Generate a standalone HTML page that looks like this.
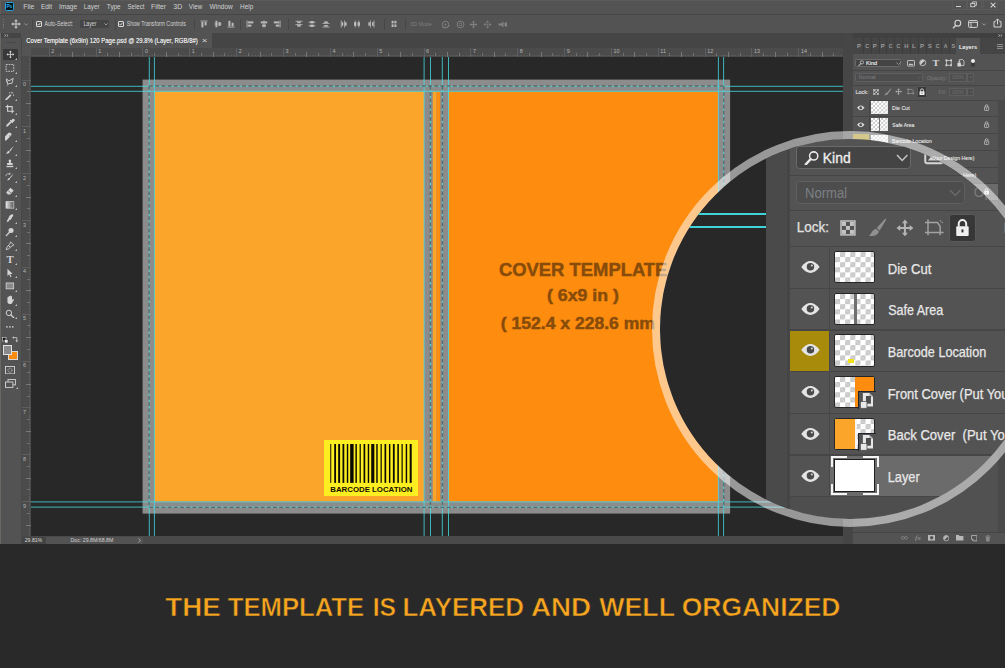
<!DOCTYPE html>
<html lang="en"><head><meta charset="utf-8"><title>Cover Template</title><style>
html,body{margin:0;padding:0;background:#292929}
body{width:1005px;height:668px;overflow:hidden;font-family:"Liberation Sans",sans-serif}
.root,.root div,.root span,.root svg{position:absolute;display:block}
.t{white-space:pre;transform-origin:0 50%}
</style></head>
<body>
<div class="root" style="left:0px;top:0px;width:1005px;height:668px;background:#292929;overflow:hidden;">
<div class="app" style="left:0px;top:0px;width:1005px;height:544px;background:#535353;">
<div class="menubar" style="left:0px;top:0px;width:1005px;height:14px;background:#535353;">
<div style="left:4.8px;top:1.9px;width:9.3px;height:9px;background:#04131d;border:1px solid #25a6da;box-sizing:border-box;border-radius:1.4px;"></div>
<span class="t" style="left:6px;top:3px;font-size:5px;line-height:6px;color:#2fb0e6;font-weight:bold;transform:translate(0.39px,0.22px) scaleX(0.97);">Ps</span>
<span class="t" style="left:23px;top:3px;font-size:6.9px;line-height:7px;color:#d2d2d2;transform:translate(0.26px,0.28px) scaleX(0.99);">File</span>
<span class="t" style="left:40px;top:3px;font-size:6.9px;line-height:7px;color:#d2d2d2;transform:translate(0.88px,0.28px) scaleX(0.94);">Edit</span>
<span class="t" style="left:58px;top:3px;font-size:6.9px;line-height:7px;color:#d2d2d2;transform:translate(0.91px,0.28px) scaleX(0.95);">Image</span>
<span class="t" style="left:83px;top:3px;font-size:6.9px;line-height:7px;color:#d2d2d2;transform:translate(0.8px,0.28px) scaleX(0.91);">Layer</span>
<span class="t" style="left:106px;top:3px;font-size:6.9px;line-height:7px;color:#d2d2d2;transform:translate(0.87px,0.28px) scaleX(0.92);">Type</span>
<span class="t" style="left:127px;top:3px;font-size:6.9px;line-height:7px;color:#d2d2d2;transform:translate(0.53px,0.28px) scaleX(0.88);">Select</span>
<span class="t" style="left:151px;top:3px;font-size:6.9px;line-height:7px;color:#d2d2d2;transform:translate(0.06px,0.28px) scaleX(0.98);">Filter</span>
<span class="t" style="left:173px;top:3px;font-size:6.9px;line-height:7px;color:#d2d2d2;transform:translate(0.32px,0.28px) scaleX(1.02);">3D</span>
<span class="t" style="left:188px;top:3px;font-size:6.9px;line-height:7px;color:#d2d2d2;transform:translate(0.87px,0.28px) scaleX(0.91);">View</span>
<span class="t" style="left:209px;top:3px;font-size:6.9px;line-height:7px;color:#d2d2d2;transform:translate(0.57px,0.28px) scaleX(0.95);">Window</span>
<span class="t" style="left:240px;top:3px;font-size:6.9px;line-height:7px;color:#d2d2d2;transform:translate(0.09px,0.28px) scaleX(0.93);">Help</span>
<div style="left:0px;top:0px;width:1005px;height:0.6px;background:#5c5a57;"></div>
<div style="left:0px;top:0px;width:0.8px;height:14px;background:#625e58;"></div>
<div style="left:951.6px;top:0px;width:15.2px;height:9.8px;background:transparent;border:0.6px solid #5a5a5a;border-top:none;box-sizing:border-box;"></div>
<div style="left:967.3px;top:0px;width:15.2px;height:9.8px;background:transparent;border:0.6px solid #5a5a5a;border-top:none;box-sizing:border-box;"></div>
<div style="left:983px;top:0px;width:15.2px;height:9.8px;background:transparent;border:0.6px solid #5a5a5a;border-top:none;box-sizing:border-box;"></div>
<div style="left:955.8px;top:6px;width:5.6px;height:1px;background:#d0d0d0;"></div>
<svg style="left:969.8px;top:1.4px;" width="7.4" height="7.4" viewBox="0 0 8 8"><rect x="0.8" y="2.6" width="4.4" height="3.6" fill="none" stroke="#d8d8d8" stroke-width="0.9"/><path d="M2.6 2.6V1h4.6v3.6H5.4" fill="none" stroke="#d8d8d8" stroke-width="0.9"/></svg>
<svg style="left:989.8px;top:1.6px;" width="6.4" height="6.4" viewBox="0 0 7 7"><path d="M0.8 0.8L6 6M6 0.8L0.8 6" stroke="#e0e0e0" stroke-width="1.1"/></svg>
</div>
<div style="left:0px;top:14px;width:1005px;height:1px;background:#454545;"></div>
<div class="optionsbar" style="left:0px;top:15px;width:1005px;height:17.5px;background:#535353;">
<div style="left:3.2px;top:3.5px;width:0.8px;height:11px;background:repeating-linear-gradient(#777 0 0.8px,transparent 0.8px 1.6px);"></div>
<svg style="left:10.5px;top:4px;" width="10" height="10" viewBox="0 0 10 10"><path d="M5 0.3L6.7 2.3H5.5V4.5H7.7V3.3L9.7 5L7.7 6.7V5.5H5.5V7.7H6.7L5 9.7L3.3 7.7H4.5V5.5H2.3V6.7L0.3 5L2.3 3.3V4.5H4.5V2.3H3.3Z" fill="#cfcfcf"/></svg>
<svg style="left:23.5px;top:7.6px;" width="4.4" height="3" viewBox="0 0 4.4 3"><path d="M0.4 0.4L2.2 2.2L4 0.4" fill="none" stroke="#aaa" stroke-width="0.7"/></svg>
<div style="left:32px;top:3.5px;width:0.6px;height:11px;background:#474747;"></div>
<div style="left:36.2px;top:5.6px;width:6px;height:6px;background:transparent;border:0.8px solid #d8d8d8;box-sizing:border-box;border-radius:1px;"></div>
<svg style="left:37.2px;top:6.6px;" width="4" height="4" viewBox="0 0 4 4"><path d="M0.6 2.1L1.6 3.1L3.5 0.8" fill="none" stroke="#e6e6e6" stroke-width="0.9"/></svg>
<span class="t" style="left:44px;top:5px;font-size:6.4px;line-height:7px;color:#d2d2d2;transform:translate(0.5px,0.21px) scaleX(0.82);">Auto-Select:</span>
<div style="left:80px;top:4.9px;width:28.8px;height:8.2px;background:#454545;border-radius:1px;"></div>
<span class="t" style="left:83px;top:5px;font-size:6.3px;line-height:7px;color:#d2d2d2;transform:translate(0.38px,0.17px) scaleX(0.83);">Layer</span>
<svg style="left:103.5px;top:7.8px;" width="4" height="3" viewBox="0 0 4 3"><path d="M0.4 0.4L2 2L3.6 0.4" fill="none" stroke="#bbb" stroke-width="0.7"/></svg>
<div style="left:114.5px;top:3.5px;width:0.6px;height:11px;background:#474747;"></div>
<div style="left:118.3px;top:5.6px;width:6px;height:6px;background:transparent;border:0.8px solid #d8d8d8;box-sizing:border-box;border-radius:1px;"></div>
<svg style="left:119.3px;top:6.6px;" width="4" height="4" viewBox="0 0 4 4"><path d="M0.6 2.1L1.6 3.1L3.5 0.8" fill="none" stroke="#e6e6e6" stroke-width="0.9"/></svg>
<span class="t" style="left:126px;top:5px;font-size:6.4px;line-height:7px;color:#d2d2d2;transform:translate(0.76px,0.21px) scaleX(0.82);">Show Transform Controls</span>
<div style="left:193.5px;top:3.5px;width:0.6px;height:11px;background:#474747;"></div>
<svg style="left:200.2px;top:5px;" width="8" height="8" viewBox="0 0 8 8"><rect x="0.5" y="0.6" width="7" height="0.9" fill="#b9b9b9"/><rect x="1.4" y="2" width="2" height="5.4" fill="#b9b9b9"/><rect x="4.6" y="2" width="2" height="3.4" fill="#b9b9b9"/></svg>
<svg style="left:213.6px;top:5px;" width="8" height="8" viewBox="0 0 8 8"><rect x="0.3" y="3.6" width="7.4" height="0.8" fill="#b9b9b9"/><rect x="1.4" y="0.8" width="2" height="6.4" fill="#b9b9b9"/><rect x="4.6" y="2" width="2" height="4" fill="#b9b9b9"/></svg>
<svg style="left:227.4px;top:5px;" width="8" height="8" viewBox="0 0 8 8"><rect x="0.5" y="6.6" width="7" height="0.9" fill="#b9b9b9"/><rect x="1.4" y="0.8" width="2" height="5.4" fill="#b9b9b9"/><rect x="4.6" y="2.8" width="2" height="3.4" fill="#b9b9b9"/></svg>
<svg style="left:245.6px;top:5px;" width="8" height="8" viewBox="0 0 8 8"><rect x="0.6" y="0.5" width="0.9" height="7" fill="#b9b9b9"/><rect x="2" y="1.4" width="5.4" height="2" fill="#b9b9b9"/><rect x="2" y="4.6" width="3.4" height="2" fill="#b9b9b9"/></svg>
<svg style="left:259.6px;top:5px;" width="8" height="8" viewBox="0 0 8 8"><rect x="3.6" y="0.3" width="0.8" height="7.4" fill="#b9b9b9"/><rect x="0.8" y="1.4" width="6.4" height="2" fill="#b9b9b9"/><rect x="2" y="4.6" width="4" height="2" fill="#b9b9b9"/></svg>
<svg style="left:272.8px;top:5px;" width="8" height="8" viewBox="0 0 8 8"><rect x="6.6" y="0.5" width="0.9" height="7" fill="#b9b9b9"/><rect x="0.8" y="1.4" width="5.4" height="2" fill="#b9b9b9"/><rect x="2.8" y="4.6" width="3.4" height="2" fill="#b9b9b9"/></svg>
<svg style="left:294.6px;top:5px;" width="8" height="8" viewBox="0 0 8 8"><rect x="0.5" y="0.8" width="7" height="0.8" fill="#b9b9b9"/><rect x="0.5" y="4.2" width="7" height="0.8" fill="#b9b9b9"/><rect x="2.2" y="1.6" width="3.6" height="1.6" fill="#b9b9b9"/><rect x="2.2" y="5" width="3.6" height="1.6" fill="#b9b9b9"/></svg>
<svg style="left:308.4px;top:5px;" width="8" height="8" viewBox="0 0 8 8"><rect x="0.5" y="1.8" width="7" height="0.8" fill="#b9b9b9"/><rect x="0.5" y="5.4" width="7" height="0.8" fill="#b9b9b9"/><rect x="2.2" y="1" width="3.6" height="2.4" fill="#b9b9b9"/><rect x="2.2" y="4.6" width="3.6" height="2.4" fill="#b9b9b9"/></svg>
<svg style="left:322px;top:5px;" width="8" height="8" viewBox="0 0 8 8"><rect x="0.5" y="3" width="7" height="0.8" fill="#b9b9b9"/><rect x="0.5" y="6.6" width="7" height="0.8" fill="#b9b9b9"/><rect x="2.2" y="1.4" width="3.6" height="1.6" fill="#b9b9b9"/><rect x="2.2" y="5" width="3.6" height="1.6" fill="#b9b9b9"/></svg>
<svg style="left:340.4px;top:5px;" width="8" height="8" viewBox="0 0 8 8"><rect x="0.8" y="0.5" width="0.8" height="7" fill="#b9b9b9"/><rect x="4.2" y="0.5" width="0.8" height="7" fill="#b9b9b9"/><rect x="1.6" y="2.2" width="1.6" height="3.6" fill="#b9b9b9"/><rect x="5" y="2.2" width="1.6" height="3.6" fill="#b9b9b9"/></svg>
<svg style="left:353.4px;top:5px;" width="8" height="8" viewBox="0 0 8 8"><rect x="1.8" y="0.5" width="0.8" height="7" fill="#b9b9b9"/><rect x="5.4" y="0.5" width="0.8" height="7" fill="#b9b9b9"/><rect x="1" y="2.2" width="2.4" height="3.6" fill="#b9b9b9"/><rect x="4.6" y="2.2" width="2.4" height="3.6" fill="#b9b9b9"/></svg>
<svg style="left:367.2px;top:5px;" width="8" height="8" viewBox="0 0 8 8"><rect x="3" y="0.5" width="0.8" height="7" fill="#b9b9b9"/><rect x="6.6" y="0.5" width="0.8" height="7" fill="#b9b9b9"/><rect x="1.4" y="2.2" width="1.6" height="3.6" fill="#b9b9b9"/><rect x="5" y="2.2" width="1.6" height="3.6" fill="#b9b9b9"/></svg>
<svg style="left:390px;top:5px;" width="8" height="8" viewBox="0 0 8 8"><rect x="1.6" y="0.8" width="2" height="2.6" fill="#b9b9b9"/><rect x="4.4" y="0.8" width="2" height="2.6" fill="#b9b9b9"/><rect x="1.6" y="4.4" width="2" height="2.6" fill="#b9b9b9"/><rect x="4.4" y="4.4" width="2" height="2.6" fill="#b9b9b9"/></svg>
<div style="left:240.4px;top:3.5px;width:0.6px;height:11px;background:#474747;"></div>
<div style="left:288.2px;top:3.5px;width:0.6px;height:11px;background:#474747;"></div>
<div style="left:383.6px;top:3.5px;width:0.6px;height:11px;background:#474747;"></div>
<div style="left:404.6px;top:3.5px;width:0.6px;height:11px;background:#474747;"></div>
<span class="t" style="left:410px;top:5px;font-size:6.2px;line-height:7px;color:#7e7e7e;transform:translate(0.19px,0.14px) scaleX(0.86);">3D Mode:</span>
<svg style="left:441.3px;top:4.5px;" width="9" height="9" viewBox="0 0 9 9"><circle cx="4.5" cy="4.5" r="3.3" fill="none" stroke="#828282" stroke-width="0.9"/><path d="M1 6.6C3 8.6 7 8 8.4 5" fill="none" stroke="#828282" stroke-width="0.9"/><circle cx="4.5" cy="4.5" r="1" fill="#828282"/></svg>
<svg style="left:455.7px;top:4.5px;" width="9" height="9" viewBox="0 0 9 9"><circle cx="4.5" cy="4.5" r="3.4" fill="none" stroke="#828282" stroke-width="0.9"/><circle cx="4.5" cy="4.5" r="1.4" fill="none" stroke="#828282" stroke-width="0.8"/></svg>
<svg style="left:469.1px;top:4.5px;" width="9" height="9" viewBox="0 0 9 9"><path d="M4.5 0.5L6 2.4H5V4H6.6V3L8.5 4.5L6.6 6V5H5V6.6H6L4.5 8.5L3 6.6H4V5H2.4V6L0.5 4.5L2.4 3V4H4V2.4H3Z" fill="#828282"/></svg>
<svg style="left:483.1px;top:4.5px;" width="9" height="9" viewBox="0 0 9 9"><path d="M4.5 0.5L6.2 2.6H2.8ZM4.5 8.5L2.8 6.4H6.2ZM0.5 4.5L2.6 2.8V6.2ZM8.5 4.5L6.4 6.2V2.8Z" fill="#828282"/><circle cx="4.5" cy="4.5" r="1" fill="#828282"/></svg>
<svg style="left:497.5px;top:4.5px;" width="10" height="9" viewBox="0 0 10 9"><path d="M0.5 3.5L3 3.5L5.5 1.5V7.5L3 5.5H0.5Z" fill="#828282"/><path d="M6.5 3L9 2V7L6.5 6Z" fill="#828282"/></svg>
<svg style="left:952px;top:3.6px;" width="10" height="10" viewBox="0 0 10 10"><circle cx="5.8" cy="4.2" r="2.9" fill="none" stroke="#d6d6d6" stroke-width="1.1"/><path d="M3.8 6.3L1 9.2" stroke="#d6d6d6" stroke-width="1.3"/></svg>
<svg style="left:968px;top:4.6px;" width="10" height="8" viewBox="0 0 10 8"><rect x="0.6" y="0.6" width="8.8" height="6.8" rx="0.8" fill="none" stroke="#d6d6d6" stroke-width="1"/><path d="M0.6 2.4H9.4M3 2.4V7.4" stroke="#d6d6d6" stroke-width="0.9"/></svg>
<svg style="left:982px;top:7.7px;" width="4.4" height="3" viewBox="0 0 4.4 3"><path d="M0.4 0.4L2.2 2.2L4 0.4" fill="none" stroke="#bbb" stroke-width="0.7"/></svg>
<svg style="left:992.5px;top:3.4px;" width="9" height="10" viewBox="0 0 9 10"><path d="M2.6 3.6H1V9H8V3.6H6.4" fill="none" stroke="#d6d6d6" stroke-width="1"/><path d="M4.5 6.4V1M2.8 2.6L4.5 0.9L6.2 2.6" fill="none" stroke="#d6d6d6" stroke-width="1"/></svg>
</div>
<div style="left:0px;top:32.5px;width:1005px;height:0.8px;background:#414141;"></div>
<div class="tabbar" style="left:22px;top:33px;width:821px;height:14.5px;background:#454545;">
<div class="tab" style="left:0px;top:0px;width:190px;height:14.5px;background:#535353;">
<span class="t" style="left:4px;top:4px;font-size:6.5px;line-height:7px;color:#e4e4e4;transform:translate(0.3px,0.04px) scaleX(0.92);text-shadow:0 0 0.3px #e4e4e4;">Cover Template (6x9in) 120 Page.psd @ 29.8% (Layer, RGB/8#)</span>
<span class="t" style="left:179px;top:3px;font-size:7.5px;line-height:9px;color:#d8d8d8;transform:translate(0.71px,0.19px) scaleX(1.32);">×</span>
</div>
</div>
<div class="toolbar" style="left:0px;top:33px;width:21.5px;height:511px;background:#535353;">
<div style="left:0px;top:0.2px;width:0.8px;height:510.8px;background:#6a6661;"></div>
<div style="left:0.8px;top:0.2px;width:20.7px;height:5.2px;background:#454545;"></div>
<svg style="left:3.6px;top:1.4px;" width="5" height="3" viewBox="0 0 5 3"><path d="M0.4 0.3L1.9 1.5L0.4 2.7M2.6 0.3L4.1 1.5L2.6 2.7" fill="none" stroke="#c8c8c8" stroke-width="0.7"/></svg>
<div style="left:5.5px;top:8.6px;width:10px;height:1.2px;background:#484848;"></div>
<div style="left:20.9px;top:5.4px;width:0.6px;height:505.6px;background:#484848;"></div>
<div style="left:2.7px;top:15.6px;width:15.6px;height:11.8px;background:#383838;border-radius:1px;"></div>
<svg style="left:5.5px;top:17.2px;" width="8.8" height="8.8" viewBox="0 0 12 12"><path d="M6 0.6L7.9 2.9H6.6V5.4H9.1V4.1L11.4 6L9.1 7.9V6.6H6.6V9.1H7.9L6 11.4L4.1 9.1H5.4V6.6H2.9V7.9L0.6 6L2.9 4.1V5.4H5.4V2.9H4.1Z" fill="#d4d4d4"/></svg>
<svg style="left:15px;top:25.2px;" width="2" height="2" viewBox="0 0 2 2"><path d="M2 0V2H0Z" fill="#c0c0c0"/></svg>
<svg style="left:5px;top:30.33px;" width="9.8" height="9.8" viewBox="0 0 12 12"><rect x="1.3" y="1.8" width="9.4" height="8.4" fill="none" stroke="#d4d4d4" stroke-width="1.1" stroke-dasharray="2 1.2"/></svg>
<svg style="left:15px;top:38.83px;" width="2" height="2" viewBox="0 0 2 2"><path d="M2 0V2H0Z" fill="#c0c0c0"/></svg>
<svg style="left:5px;top:43.96px;" width="9.8" height="9.8" viewBox="0 0 12 12"><path d="M1.5 2L5 4.8L10 1.6L8.6 7.6L4.4 8.2L2.6 10.6" fill="none" stroke="#d4d4d4" stroke-width="1.1" stroke-linejoin="round"/><path d="M3.4 8.4L1.6 3Z" stroke="#d4d4d4" stroke-width="1"/></svg>
<svg style="left:15px;top:52.46px;" width="2" height="2" viewBox="0 0 2 2"><path d="M2 0V2H0Z" fill="#c0c0c0"/></svg>
<svg style="left:5px;top:57.59px;" width="9.8" height="9.8" viewBox="0 0 12 12"><path d="M1.4 10.6L6.6 5.4" stroke="#d4d4d4" stroke-width="1.9" stroke-linecap="round"/><path d="M8.6 1V3.2M7.5 2.1H9.7M10.4 4.4V5.8M9.7 5.1H11.1M5.6 1.6V2.8M5 2.2H6.2" stroke="#d4d4d4" stroke-width="0.8"/></svg>
<svg style="left:15px;top:66.09px;" width="2" height="2" viewBox="0 0 2 2"><path d="M2 0V2H0Z" fill="#c0c0c0"/></svg>
<svg style="left:5px;top:71.22px;" width="9.8" height="9.8" viewBox="0 0 12 12"><path d="M3.2 0.8V8.8H11.2M0.8 3.2H8.8V11.2" fill="none" stroke="#d4d4d4" stroke-width="1.3"/></svg>
<svg style="left:15px;top:79.72px;" width="2" height="2" viewBox="0 0 2 2"><path d="M2 0V2H0Z" fill="#c0c0c0"/></svg>
<svg style="left:5px;top:84.85px;" width="9.8" height="9.8" viewBox="0 0 12 12"><path d="M1.2 10.8L2 8.4L6.4 4L8 5.6L3.6 10Z" fill="#d4d4d4"/><path d="M6.2 2.6L9.4 5.8M7.4 4.4L9.6 1.8a1 1 0 0 1 1.4 1.4L8.6 5.4" stroke="#d4d4d4" stroke-width="1.4" fill="#d4d4d4"/></svg>
<svg style="left:15px;top:93.35px;" width="2" height="2" viewBox="0 0 2 2"><path d="M2 0V2H0Z" fill="#c0c0c0"/></svg>
<svg style="left:5px;top:98.48px;" width="9.8" height="9.8" viewBox="0 0 12 12"><rect x="-1.6" y="5.6" width="11.6" height="4.6" rx="2.2" transform="rotate(-45 4.2 7.9) translate(0,-1.6)" fill="#d4d4d4"/><circle cx="6" cy="6" r="0.7" fill="#535353"/></svg>
<svg style="left:15px;top:106.98px;" width="2" height="2" viewBox="0 0 2 2"><path d="M2 0V2H0Z" fill="#c0c0c0"/></svg>
<svg style="left:5px;top:112.11px;" width="9.8" height="9.8" viewBox="0 0 12 12"><path d="M10.8 1.2L5.4 6.4L6.6 7.6Z" fill="#d4d4d4"/><path d="M4.8 7L6 8.2C5.6 10 3.4 10.8 1.2 10.6C2.6 9.8 2.6 7.4 4.8 7Z" fill="#d4d4d4"/></svg>
<svg style="left:15px;top:120.61px;" width="2" height="2" viewBox="0 0 2 2"><path d="M2 0V2H0Z" fill="#c0c0c0"/></svg>
<svg style="left:5px;top:125.74px;" width="9.8" height="9.8" viewBox="0 0 12 12"><path d="M4.4 1.6a1.7 1.7 0 0 1 3.2 0L7 5H9.4V7.2H2.6V5H5Z" fill="#d4d4d4"/><rect x="1.8" y="8.4" width="8.4" height="1.6" fill="#d4d4d4"/></svg>
<svg style="left:15px;top:134.24px;" width="2" height="2" viewBox="0 0 2 2"><path d="M2 0V2H0Z" fill="#c0c0c0"/></svg>
<svg style="left:5px;top:139.37px;" width="9.8" height="9.8" viewBox="0 0 12 12"><path d="M10.8 1.6L6 6.4L7 7.4Z" fill="#d4d4d4"/><path d="M5.4 7L6.4 8C6 9.6 4.2 10.4 2.4 10.2C3.6 9.4 3.6 7.4 5.4 7Z" fill="#d4d4d4"/><path d="M1 5.2A3.4 3.4 0 0 1 6 2.4M6.2 0.8V2.8H4.2" fill="none" stroke="#d4d4d4" stroke-width="0.9"/></svg>
<svg style="left:15px;top:147.87px;" width="2" height="2" viewBox="0 0 2 2"><path d="M2 0V2H0Z" fill="#c0c0c0"/></svg>
<svg style="left:5px;top:153px;" width="9.8" height="9.8" viewBox="0 0 12 12"><path d="M1.4 8L6.6 2.2L10.6 5.6L6.4 10.4H3.6Z" fill="#d4d4d4"/><path d="M3.6 5.6L7.8 9" stroke="#535353" stroke-width="0.8"/></svg>
<svg style="left:15px;top:161.5px;" width="2" height="2" viewBox="0 0 2 2"><path d="M2 0V2H0Z" fill="#c0c0c0"/></svg>
<svg style="left:5px;top:166.63px;" width="9.8" height="9.8" viewBox="0 0 12 12"><defs><linearGradient id="gga" x1="0" x2="1"><stop offset="0" stop-color="#e6e6e6"/><stop offset="1" stop-color="#555"/></linearGradient></defs><rect x="1.2" y="2" width="9.6" height="8" fill="url(#gga)" stroke="#d4d4d4" stroke-width="0.9"/></svg>
<svg style="left:15px;top:175.13px;" width="2" height="2" viewBox="0 0 2 2"><path d="M2 0V2H0Z" fill="#c0c0c0"/></svg>
<svg style="left:5px;top:180.26px;" width="9.8" height="9.8" viewBox="0 0 12 12"><path d="M2 10.6C2.6 8 4 7.4 4.6 5.4C5 4 6.6 1.6 8.8 1.4C10.8 1.4 10.6 3.8 8.8 5C8 5.6 8.8 7.4 6.6 8.2C5.2 8.6 4.6 9.6 4 10.8Z" fill="#d4d4d4"/></svg>
<svg style="left:15px;top:188.76px;" width="2" height="2" viewBox="0 0 2 2"><path d="M2 0V2H0Z" fill="#c0c0c0"/></svg>
<svg style="left:5px;top:193.89px;" width="9.8" height="9.8" viewBox="0 0 12 12"><circle cx="7.4" cy="4.4" r="3.1" fill="#d4d4d4"/><path d="M5.2 6.8L1.6 10.6" stroke="#d4d4d4" stroke-width="1.6" stroke-linecap="round"/></svg>
<svg style="left:15px;top:202.39px;" width="2" height="2" viewBox="0 0 2 2"><path d="M2 0V2H0Z" fill="#c0c0c0"/></svg>
<svg style="left:5px;top:207.52px;" width="9.8" height="9.8" viewBox="0 0 12 12"><path d="M6.8 1L10.8 5L8.6 6L4.4 9.6L1.4 10.6L2.4 7.6L6 3.4Z" fill="none" stroke="#d4d4d4" stroke-width="1.1" stroke-linejoin="round"/><circle cx="5.4" cy="6.6" r="0.9" fill="#d4d4d4"/></svg>
<svg style="left:15px;top:216.02px;" width="2" height="2" viewBox="0 0 2 2"><path d="M2 0V2H0Z" fill="#c0c0c0"/></svg>
<span class="t" style="left:6px;top:219px;font-size:11px;line-height:12px;color:#d4d4d4;font-weight:bold;font-family:'Liberation Serif',serif;transform:translate(0.44px,0.85px) scaleX(0.97);">T</span>
<svg style="left:15px;top:229.65px;" width="2" height="2" viewBox="0 0 2 2"><path d="M2 0V2H0Z" fill="#c0c0c0"/></svg>
<svg style="left:5px;top:234.78px;" width="9.8" height="9.8" viewBox="0 0 12 12"><path d="M3 1L9.4 7.2H6.4L8 10.6L6.6 11.2L5.2 7.8L3 9.8Z" fill="#d4d4d4"/></svg>
<svg style="left:15px;top:243.28px;" width="2" height="2" viewBox="0 0 2 2"><path d="M2 0V2H0Z" fill="#c0c0c0"/></svg>
<svg style="left:5px;top:248.41px;" width="9.8" height="9.8" viewBox="0 0 12 12"><rect x="1.4" y="2.4" width="9.2" height="7.2" fill="#8a8a8a" stroke="#d4d4d4" stroke-width="1"/></svg>
<svg style="left:15px;top:256.91px;" width="2" height="2" viewBox="0 0 2 2"><path d="M2 0V2H0Z" fill="#c0c0c0"/></svg>
<svg style="left:5px;top:262.04px;" width="9.8" height="9.8" viewBox="0 0 12 12"><path d="M3 6.6V3a.7.7 0 0 1 1.4 0V1.8a.7.7 0 0 1 1.4 0V1.4a.7.7 0 0 1 1.4 0V2a.7.7 0 0 1 1.4 0V6.4L9.6 5a.8.8 0 0 1 1.2 1L8.6 10.2C8 11 7 11.2 6 11.2C4.2 11.2 3 10 3 8.4Z" fill="#d4d4d4"/></svg>
<svg style="left:15px;top:270.54px;" width="2" height="2" viewBox="0 0 2 2"><path d="M2 0V2H0Z" fill="#c0c0c0"/></svg>
<svg style="left:5px;top:275.67px;" width="9.8" height="9.8" viewBox="0 0 12 12"><circle cx="4.8" cy="4.8" r="3.3" fill="none" stroke="#d4d4d4" stroke-width="1.2"/><path d="M7.2 7.2L10.8 10.8" stroke="#d4d4d4" stroke-width="1.6" stroke-linecap="round"/></svg>
<svg style="left:15px;top:284.17px;" width="2" height="2" viewBox="0 0 2 2"><path d="M2 0V2H0Z" fill="#c0c0c0"/></svg>
<svg style="left:5px;top:289.3px;" width="9.8" height="9.8" viewBox="0 0 12 12"><circle cx="2.4" cy="6" r="1" fill="#d4d4d4"/><circle cx="6" cy="6" r="1" fill="#d4d4d4"/><circle cx="9.6" cy="6" r="1" fill="#d4d4d4"/></svg>
<svg style="left:2.4px;top:303.6px;" width="6.4" height="6.4" viewBox="0 0 6.4 6.4"><rect x="0.4" y="0.4" width="3.6" height="3.6" fill="#111" stroke="#ddd" stroke-width="0.6"/><rect x="2.4" y="2.4" width="3.6" height="3.6" fill="#eee" stroke="#222" stroke-width="0.5"/></svg>
<svg style="left:11.6px;top:303.4px;" width="6.4" height="6.4" viewBox="0 0 6.4 6.4"><path d="M1.6 1.6H4.8V4.8" fill="none" stroke="#d0d0d0" stroke-width="0.8"/><path d="M0.2 1.6L1.8 0.2V3ZM4.8 6.2L3.4 4.6H6.2Z" fill="#d0d0d0"/></svg>
<div style="left:8px;top:318px;width:9.6px;height:9.4px;background:#fd8c0e;border:0.7px solid #d8d8d8;box-sizing:border-box;"></div>
<div style="left:2.6px;top:312.2px;width:9.6px;height:9.6px;background:#8a8a8a;border:0.7px solid #e0e0e0;box-sizing:border-box;"></div>
<svg style="left:5px;top:332.6px;" width="10" height="8.4" viewBox="0 0 10 8.4"><rect x="0.5" y="0.5" width="9" height="7.4" fill="none" stroke="#d4d4d4" stroke-width="0.9"/><circle cx="5" cy="4.2" r="2" fill="none" stroke="#d4d4d4" stroke-width="0.8" stroke-dasharray="0.9 0.6"/></svg>
<svg style="left:4.6px;top:345.6px;" width="11" height="9.4" viewBox="0 0 11 9.4"><rect x="3" y="0.5" width="7.4" height="5.4" fill="#535353" stroke="#d4d4d4" stroke-width="0.9"/><rect x="0.5" y="3" width="7.4" height="5.4" fill="#535353" stroke="#d4d4d4" stroke-width="0.9"/></svg>
<svg style="left:15.6px;top:354px;" width="2" height="2" viewBox="0 0 2 2"><path d="M2 0V2H0Z" fill="#c0c0c0"/></svg>
</div>
<div class="ruler-h" style="left:22px;top:48px;width:821px;height:8.5px;background:#4b4b4b;overflow:hidden;">
<div style="left:-0.5px;top:-0.5px;width:9px;height:9px;background:#545454;"></div>
<div style="left:8.5px;top:6.6px;width:812.5px;height:1.6px;background:repeating-linear-gradient(90deg,#666 0 1px,transparent 1.1px 2.93px);background-position:0.63px 0;"></div>
<div style="left:26.7px;top:0px;width:0.8px;height:8.5px;background:#5e5e5e;"></div>
<div style="left:50.12px;top:4px;width:0.8px;height:4.5px;background:#787878;"></div>
<div style="left:38.41px;top:5.4px;width:0.8px;height:3px;background:#707070;"></div>
<div style="left:61.84px;top:5.4px;width:0.8px;height:3px;background:#707070;"></div>
<span class="t" style="left:29px;top:0px;font-size:5.4px;line-height:6px;color:#b4b4b4;transform:translate(0.3px,0.46px) scaleX(1.001);">2</span>
<div style="left:73.55px;top:0px;width:0.8px;height:8.5px;background:#5e5e5e;"></div>
<div style="left:96.98px;top:4px;width:0.8px;height:4.5px;background:#787878;"></div>
<div style="left:85.26px;top:5.4px;width:0.8px;height:3px;background:#707070;"></div>
<div style="left:108.69px;top:5.4px;width:0.8px;height:3px;background:#707070;"></div>
<span class="t" style="left:76px;top:0px;font-size:5.4px;line-height:6px;color:#b4b4b4;transform:translate(0.15px,0.46px) scaleX(1.001);">1</span>
<div style="left:120.4px;top:0px;width:0.8px;height:8.5px;background:#5e5e5e;"></div>
<div style="left:143.83px;top:4px;width:0.8px;height:4.5px;background:#787878;"></div>
<div style="left:132.11px;top:5.4px;width:0.8px;height:3px;background:#707070;"></div>
<div style="left:155.54px;top:5.4px;width:0.8px;height:3px;background:#707070;"></div>
<span class="t" style="left:123px;top:0px;font-size:5.4px;line-height:6px;color:#b4b4b4;transform:translate(0px,0.46px) scaleX(1.001);">0</span>
<div style="left:167.25px;top:0px;width:0.8px;height:8.5px;background:#5e5e5e;"></div>
<div style="left:190.68px;top:4px;width:0.8px;height:4.5px;background:#787878;"></div>
<div style="left:178.96px;top:5.4px;width:0.8px;height:3px;background:#707070;"></div>
<div style="left:202.39px;top:5.4px;width:0.8px;height:3px;background:#707070;"></div>
<span class="t" style="left:169px;top:0px;font-size:5.4px;line-height:6px;color:#b4b4b4;transform:translate(0.85px,0.46px) scaleX(1.001);">1</span>
<div style="left:214.1px;top:0px;width:0.8px;height:8.5px;background:#5e5e5e;"></div>
<div style="left:237.53px;top:4px;width:0.8px;height:4.5px;background:#787878;"></div>
<div style="left:225.81px;top:5.4px;width:0.8px;height:3px;background:#707070;"></div>
<div style="left:249.24px;top:5.4px;width:0.8px;height:3px;background:#707070;"></div>
<span class="t" style="left:216px;top:0px;font-size:5.4px;line-height:6px;color:#b4b4b4;transform:translate(0.7px,0.46px) scaleX(1.001);">2</span>
<div style="left:260.95px;top:0px;width:0.8px;height:8.5px;background:#5e5e5e;"></div>
<div style="left:284.38px;top:4px;width:0.8px;height:4.5px;background:#787878;"></div>
<div style="left:272.66px;top:5.4px;width:0.8px;height:3px;background:#707070;"></div>
<div style="left:296.09px;top:5.4px;width:0.8px;height:3px;background:#707070;"></div>
<span class="t" style="left:263px;top:0px;font-size:5.4px;line-height:6px;color:#b4b4b4;transform:translate(0.55px,0.46px) scaleX(1.001);">3</span>
<div style="left:307.8px;top:0px;width:0.8px;height:8.5px;background:#5e5e5e;"></div>
<div style="left:331.23px;top:4px;width:0.8px;height:4.5px;background:#787878;"></div>
<div style="left:319.51px;top:5.4px;width:0.8px;height:3px;background:#707070;"></div>
<div style="left:342.94px;top:5.4px;width:0.8px;height:3px;background:#707070;"></div>
<span class="t" style="left:310px;top:0px;font-size:5.4px;line-height:6px;color:#b4b4b4;transform:translate(0.4px,0.46px) scaleX(1.001);">4</span>
<div style="left:354.65px;top:0px;width:0.8px;height:8.5px;background:#5e5e5e;"></div>
<div style="left:378.07px;top:4px;width:0.8px;height:4.5px;background:#787878;"></div>
<div style="left:366.36px;top:5.4px;width:0.8px;height:3px;background:#707070;"></div>
<div style="left:389.79px;top:5.4px;width:0.8px;height:3px;background:#707070;"></div>
<span class="t" style="left:357px;top:0px;font-size:5.4px;line-height:6px;color:#b4b4b4;transform:translate(0.25px,0.46px) scaleX(1.001);">5</span>
<div style="left:401.5px;top:0px;width:0.8px;height:8.5px;background:#5e5e5e;"></div>
<div style="left:424.93px;top:4px;width:0.8px;height:4.5px;background:#787878;"></div>
<div style="left:413.21px;top:5.4px;width:0.8px;height:3px;background:#707070;"></div>
<div style="left:436.64px;top:5.4px;width:0.8px;height:3px;background:#707070;"></div>
<span class="t" style="left:404px;top:0px;font-size:5.4px;line-height:6px;color:#b4b4b4;transform:translate(0.1px,0.46px) scaleX(1.001);">6</span>
<div style="left:448.35px;top:0px;width:0.8px;height:8.5px;background:#5e5e5e;"></div>
<div style="left:471.78px;top:4px;width:0.8px;height:4.5px;background:#787878;"></div>
<div style="left:460.06px;top:5.4px;width:0.8px;height:3px;background:#707070;"></div>
<div style="left:483.49px;top:5.4px;width:0.8px;height:3px;background:#707070;"></div>
<span class="t" style="left:450px;top:0px;font-size:5.4px;line-height:6px;color:#b4b4b4;transform:translate(0.95px,0.46px) scaleX(1.001);">7</span>
<div style="left:495.2px;top:0px;width:0.8px;height:8.5px;background:#5e5e5e;"></div>
<div style="left:518.62px;top:4px;width:0.8px;height:4.5px;background:#787878;"></div>
<div style="left:506.91px;top:5.4px;width:0.8px;height:3px;background:#707070;"></div>
<div style="left:530.34px;top:5.4px;width:0.8px;height:3px;background:#707070;"></div>
<span class="t" style="left:497px;top:0px;font-size:5.4px;line-height:6px;color:#b4b4b4;transform:translate(0.8px,0.46px) scaleX(1.001);">8</span>
<div style="left:542.05px;top:0px;width:0.8px;height:8.5px;background:#5e5e5e;"></div>
<div style="left:565.48px;top:4px;width:0.8px;height:4.5px;background:#787878;"></div>
<div style="left:553.76px;top:5.4px;width:0.8px;height:3px;background:#707070;"></div>
<div style="left:577.19px;top:5.4px;width:0.8px;height:3px;background:#707070;"></div>
<span class="t" style="left:544px;top:0px;font-size:5.4px;line-height:6px;color:#b4b4b4;transform:translate(0.65px,0.46px) scaleX(1.001);">9</span>
<div style="left:588.9px;top:0px;width:0.8px;height:8.5px;background:#5e5e5e;"></div>
<div style="left:612.32px;top:4px;width:0.8px;height:4.5px;background:#787878;"></div>
<div style="left:600.61px;top:5.4px;width:0.8px;height:3px;background:#707070;"></div>
<div style="left:624.04px;top:5.4px;width:0.8px;height:3px;background:#707070;"></div>
<span class="t" style="left:591px;top:0px;font-size:5.4px;line-height:6px;color:#b4b4b4;transform:translate(0.5px,0.46px) scaleX(1.001);">10</span>
<div style="left:635.75px;top:0px;width:0.8px;height:8.5px;background:#5e5e5e;"></div>
<div style="left:659.17px;top:4px;width:0.8px;height:4.5px;background:#787878;"></div>
<div style="left:647.46px;top:5.4px;width:0.8px;height:3px;background:#707070;"></div>
<div style="left:670.89px;top:5.4px;width:0.8px;height:3px;background:#707070;"></div>
<span class="t" style="left:638px;top:0px;font-size:5.4px;line-height:6px;color:#b4b4b4;transform:translate(0.35px,0.46px) scaleX(1.001);">11</span>
<div style="left:682.6px;top:0px;width:0.8px;height:8.5px;background:#5e5e5e;"></div>
<div style="left:706.02px;top:4px;width:0.8px;height:4.5px;background:#787878;"></div>
<div style="left:694.31px;top:5.4px;width:0.8px;height:3px;background:#707070;"></div>
<div style="left:717.74px;top:5.4px;width:0.8px;height:3px;background:#707070;"></div>
<span class="t" style="left:685px;top:0px;font-size:5.4px;line-height:6px;color:#b4b4b4;transform:translate(0.2px,0.46px) scaleX(1.001);">12</span>
<div style="left:729.45px;top:0px;width:0.8px;height:8.5px;background:#5e5e5e;"></div>
<div style="left:752.88px;top:4px;width:0.8px;height:4.5px;background:#787878;"></div>
<div style="left:741.16px;top:5.4px;width:0.8px;height:3px;background:#707070;"></div>
<div style="left:764.59px;top:5.4px;width:0.8px;height:3px;background:#707070;"></div>
<span class="t" style="left:732px;top:0px;font-size:5.4px;line-height:6px;color:#b4b4b4;transform:translate(0.05px,0.46px) scaleX(1.001);">13</span>
<div style="left:776.3px;top:0px;width:0.8px;height:8.5px;background:#5e5e5e;"></div>
<div style="left:799.72px;top:4px;width:0.8px;height:4.5px;background:#787878;"></div>
<div style="left:788.01px;top:5.4px;width:0.8px;height:3px;background:#707070;"></div>
<div style="left:811.44px;top:5.4px;width:0.8px;height:3px;background:#707070;"></div>
<span class="t" style="left:778px;top:0px;font-size:5.4px;line-height:6px;color:#b4b4b4;transform:translate(0.9px,0.46px) scaleX(1.001);">14</span>
</div>
<div class="ruler-v" style="left:22px;top:56px;width:8.5px;height:480.5px;background:#4b4b4b;overflow:hidden;">
<div style="left:6.6px;top:0.5px;width:1.6px;height:480px;background:repeating-linear-gradient(180deg,#666 0 1px,transparent 1.1px 2.93px);background-position:0 2.5px;"></div>
<div style="left:0px;top:23.5px;width:8.5px;height:0.8px;background:#5e5e5e;"></div>
<div style="left:4px;top:46.92px;width:4.5px;height:0.8px;background:#787878;"></div>
<div style="left:5.4px;top:35.21px;width:3px;height:0.8px;background:#707070;"></div>
<div style="left:5.4px;top:58.64px;width:3px;height:0.8px;background:#707070;"></div>
<span class="t" style="left:1px;top:24px;font-size:5.4px;line-height:6px;color:#b4b4b4;transform:translate(0px,0.96px) scaleX(1.001);">0</span>
<div style="left:0px;top:70.35px;width:8.5px;height:0.8px;background:#5e5e5e;"></div>
<div style="left:4px;top:93.78px;width:4.5px;height:0.8px;background:#787878;"></div>
<div style="left:5.4px;top:82.06px;width:3px;height:0.8px;background:#707070;"></div>
<div style="left:5.4px;top:105.49px;width:3px;height:0.8px;background:#707070;"></div>
<span class="t" style="left:1px;top:71px;font-size:5.4px;line-height:6px;color:#b4b4b4;transform:translate(0px,0.81px) scaleX(1.001);">1</span>
<div style="left:0px;top:117.2px;width:8.5px;height:0.8px;background:#5e5e5e;"></div>
<div style="left:4px;top:140.62px;width:4.5px;height:0.8px;background:#787878;"></div>
<div style="left:5.4px;top:128.91px;width:3px;height:0.8px;background:#707070;"></div>
<div style="left:5.4px;top:152.34px;width:3px;height:0.8px;background:#707070;"></div>
<span class="t" style="left:1px;top:118px;font-size:5.4px;line-height:6px;color:#b4b4b4;transform:translate(0px,0.66px) scaleX(1.001);">2</span>
<div style="left:0px;top:164.05px;width:8.5px;height:0.8px;background:#5e5e5e;"></div>
<div style="left:4px;top:187.48px;width:4.5px;height:0.8px;background:#787878;"></div>
<div style="left:5.4px;top:175.76px;width:3px;height:0.8px;background:#707070;"></div>
<div style="left:5.4px;top:199.19px;width:3px;height:0.8px;background:#707070;"></div>
<span class="t" style="left:1px;top:165px;font-size:5.4px;line-height:6px;color:#b4b4b4;transform:translate(0px,0.51px) scaleX(1.001);">3</span>
<div style="left:0px;top:210.9px;width:8.5px;height:0.8px;background:#5e5e5e;"></div>
<div style="left:4px;top:234.32px;width:4.5px;height:0.8px;background:#787878;"></div>
<div style="left:5.4px;top:222.61px;width:3px;height:0.8px;background:#707070;"></div>
<div style="left:5.4px;top:246.04px;width:3px;height:0.8px;background:#707070;"></div>
<span class="t" style="left:1px;top:212px;font-size:5.4px;line-height:6px;color:#b4b4b4;transform:translate(0px,0.36px) scaleX(1.001);">4</span>
<div style="left:0px;top:257.75px;width:8.5px;height:0.8px;background:#5e5e5e;"></div>
<div style="left:4px;top:281.18px;width:4.5px;height:0.8px;background:#787878;"></div>
<div style="left:5.4px;top:269.46px;width:3px;height:0.8px;background:#707070;"></div>
<div style="left:5.4px;top:292.89px;width:3px;height:0.8px;background:#707070;"></div>
<span class="t" style="left:1px;top:259px;font-size:5.4px;line-height:6px;color:#b4b4b4;transform:translate(0px,0.21px) scaleX(1.001);">5</span>
<div style="left:0px;top:304.6px;width:8.5px;height:0.8px;background:#5e5e5e;"></div>
<div style="left:4px;top:328.03px;width:4.5px;height:0.8px;background:#787878;"></div>
<div style="left:5.4px;top:316.31px;width:3px;height:0.8px;background:#707070;"></div>
<div style="left:5.4px;top:339.74px;width:3px;height:0.8px;background:#707070;"></div>
<span class="t" style="left:1px;top:306px;font-size:5.4px;line-height:6px;color:#b4b4b4;transform:translate(0px,0.06px) scaleX(1.001);">6</span>
<div style="left:0px;top:351.45px;width:8.5px;height:0.8px;background:#5e5e5e;"></div>
<div style="left:4px;top:374.88px;width:4.5px;height:0.8px;background:#787878;"></div>
<div style="left:5.4px;top:363.16px;width:3px;height:0.8px;background:#707070;"></div>
<div style="left:5.4px;top:386.59px;width:3px;height:0.8px;background:#707070;"></div>
<span class="t" style="left:1px;top:352px;font-size:5.4px;line-height:6px;color:#b4b4b4;transform:translate(0px,0.91px) scaleX(1.001);">7</span>
<div style="left:0px;top:398.3px;width:8.5px;height:0.8px;background:#5e5e5e;"></div>
<div style="left:4px;top:421.73px;width:4.5px;height:0.8px;background:#787878;"></div>
<div style="left:5.4px;top:410.01px;width:3px;height:0.8px;background:#707070;"></div>
<div style="left:5.4px;top:433.44px;width:3px;height:0.8px;background:#707070;"></div>
<span class="t" style="left:1px;top:399px;font-size:5.4px;line-height:6px;color:#b4b4b4;transform:translate(0px,0.76px) scaleX(1.001);">8</span>
<div style="left:0px;top:445.15px;width:8.5px;height:0.8px;background:#5e5e5e;"></div>
<div style="left:4px;top:468.58px;width:4.5px;height:0.8px;background:#787878;"></div>
<div style="left:5.4px;top:456.86px;width:3px;height:0.8px;background:#707070;"></div>
<div style="left:5.4px;top:480.29px;width:3px;height:0.8px;background:#707070;"></div>
<span class="t" style="left:1px;top:446px;font-size:5.4px;line-height:6px;color:#b4b4b4;transform:translate(0px,0.61px) scaleX(1.001);">9</span>
</div>
<div class="canvas" style="left:31px;top:57px;width:812px;height:479.5px;background:#282828;overflow:hidden;">
<svg style="left:0px;top:0px;" width="812" height="480" viewBox="0 0 812 480"><rect x="111.6" y="22.6" width="587.5" height="434" fill="#8c8c8c"/><rect x="123.5" y="34.6" width="269.5" height="409.9" fill="#fca52b"/><rect x="401.8" y="34.6" width="3.7" height="409.9" fill="#fca52b"/><rect x="405.5" y="34.6" width="3.7" height="409.9" fill="#fd8c0f"/><rect x="417.6" y="34.6" width="269.6" height="409.9" fill="#fd8c0f"/><path d="M118.3 -0.5L118.3 479.5" stroke="rgb(66,222,230)" stroke-opacity="0.78" stroke-width="1"/><path d="M123.4 -0.5L123.4 479.5" stroke="rgb(66,222,230)" stroke-opacity="0.78" stroke-width="1"/><path d="M393.1 -0.5L393.1 479.5" stroke="rgb(66,222,230)" stroke-opacity="0.78" stroke-width="1"/><path d="M399.5 -0.5L399.5 479.5" stroke="rgb(66,222,230)" stroke-opacity="0.78" stroke-width="1"/><path d="M411.3 -0.5L411.3 479.5" stroke="rgb(66,222,230)" stroke-opacity="0.78" stroke-width="1"/><path d="M417.5 -0.5L417.5 479.5" stroke="rgb(66,222,230)" stroke-opacity="0.78" stroke-width="1"/><path d="M687.4 -0.5L687.4 479.5" stroke="rgb(66,222,230)" stroke-opacity="0.78" stroke-width="1"/><path d="M692.6 -0.5L692.6 479.5" stroke="rgb(66,222,230)" stroke-opacity="0.78" stroke-width="1"/><path d="M-0.5 29.3L812 29.3" stroke="rgb(66,222,230)" stroke-opacity="0.78" stroke-width="1"/><path d="M-0.5 34.3L812 34.3" stroke="rgb(66,222,230)" stroke-opacity="0.78" stroke-width="1"/><path d="M-0.5 444.9L812 444.9" stroke="rgb(66,222,230)" stroke-opacity="0.78" stroke-width="1"/><path d="M-0.5 450.1L812 450.1" stroke="rgb(66,222,230)" stroke-opacity="0.78" stroke-width="1"/><path d="M118.1 29L118.1 450.4" stroke="#585858" stroke-opacity="0.8" stroke-width="1.4" stroke-dasharray="3.8 2.4"/><path d="M399.4 29L399.4 450.4" stroke="#585858" stroke-opacity="0.8" stroke-width="1.4" stroke-dasharray="3.8 2.4"/><path d="M411.4 29L411.4 450.4" stroke="#585858" stroke-opacity="0.8" stroke-width="1.4" stroke-dasharray="3.8 2.4"/><path d="M692.8 29L692.8 450.4" stroke="#585858" stroke-opacity="0.8" stroke-width="1.4" stroke-dasharray="3.8 2.4"/><path d="M118.1 29L692.8 29" stroke="#585858" stroke-opacity="0.8" stroke-width="1.4" stroke-dasharray="3.8 2.4"/><path d="M118.1 450.4L692.8 450.4" stroke="#585858" stroke-opacity="0.8" stroke-width="1.4" stroke-dasharray="3.8 2.4"/></svg>
<div class="document" style="left:111px;top:22px;width:587.9px;height:434.5px;">
<div class="barcode" style="left:182px;top:361px;width:94.1px;height:55.6px;background:#fdee21;">
<svg style="left:0.3px;top:3.8px;" width="93.8" height="38.9" viewBox="0 0 93.8 38.9"><rect x="6.27" y="0" width="0.96" height="38.9" fill="#0c0a02"/><rect x="10.22" y="0" width="1.8" height="38.9" fill="#0c0a02"/><rect x="14.17" y="0" width="1.92" height="38.9" fill="#0c0a02"/><rect x="18.48" y="0" width="1.8" height="38.9" fill="#0c0a02"/><rect x="22.8" y="0" width="1.44" height="38.9" fill="#0c0a02"/><rect x="26.15" y="0" width="3.47" height="38.9" fill="#0c0a02"/><rect x="31.42" y="0" width="1.44" height="38.9" fill="#0c0a02"/><rect x="35.61" y="0" width="1.2" height="38.9" fill="#0c0a02"/><rect x="39.56" y="0" width="1.68" height="38.9" fill="#0c0a02"/><rect x="43.75" y="0" width="1.44" height="38.9" fill="#0c0a02"/><rect x="47.23" y="0" width="3.11" height="38.9" fill="#0c0a02"/><rect x="52.26" y="0" width="1.44" height="38.9" fill="#0c0a02"/><rect x="56.57" y="0" width="1.2" height="38.9" fill="#0c0a02"/><rect x="60.52" y="0" width="1.68" height="38.9" fill="#0c0a02"/><rect x="64.95" y="0" width="1.44" height="38.9" fill="#0c0a02"/><rect x="68.9" y="0" width="1.8" height="38.9" fill="#0c0a02"/><rect x="73.33" y="0" width="1.56" height="38.9" fill="#0c0a02"/><rect x="77.53" y="0" width="1.2" height="38.9" fill="#0c0a02"/><rect x="81.72" y="0" width="1.44" height="38.9" fill="#0c0a02"/><rect x="85.67" y="0" width="2.04" height="38.9" fill="#0c0a02"/></svg>
<span class="t" style="left:6px;top:44px;font-size:7.4px;line-height:9px;color:#141000;font-weight:bold;transform:translate(0.29px,0.85px) scaleX(1.06);">BARCODE LOCATION</span>
</div>
<span class="t" style="left:356px;top:179px;font-size:18.8px;line-height:21px;color:#874b0a;font-weight:bold;transform:translate(0.96px,0.79px) scaleX(0.98);-webkit-text-stroke:0.45px #874b0a;">COVER TEMPLATE</span>
<span class="t" style="left:405px;top:207px;font-size:15.8px;line-height:17px;color:#874b0a;font-weight:bold;transform:translate(0.01px,0.75px) scaleX(1.12);-webkit-text-stroke:0.45px #874b0a;">( 6x9 in )</span>
<span class="t" style="left:358px;top:235px;font-size:15.8px;line-height:17px;color:#874b0a;font-weight:bold;transform:translate(0.82px,0.55px) scaleX(1.11);-webkit-text-stroke:0.45px #874b0a;">( 152.4 x 228.6 mm )</span>
</div>
</div>
<div class="statusbar" style="left:22px;top:536px;width:821px;height:8px;background:#4a4a4a;">
<div style="left:-0.5px;top:0.5px;width:121px;height:7.5px;background:#535353;"></div>
<div style="left:0px;top:1px;width:24.4px;height:6.6px;background:#444;"></div>
<span class="t" style="left:2px;top:1px;font-size:5.2px;line-height:6px;color:#dcdcdc;transform:translate(0.74px,0.09px) scaleX(0.99);">29.81%</span>
<span class="t" style="left:48px;top:1px;font-size:5.2px;line-height:6px;color:#d0d0d0;transform:translate(0.58px,0.09px) scaleX(1.01);">Doc: 29.8M/68.8M</span>
<svg style="left:116px;top:1.8px;" width="3" height="5" viewBox="0 0 3 5"><path d="M0.5 0.5L2.4 2.5L0.5 4.5" fill="none" stroke="#ccc" stroke-width="0.7"/></svg>
</div>
<div style="left:843px;top:33px;width:9.6px;height:511px;background:#464646;"></div>
<div class="panel" style="left:853px;top:33px;width:152px;height:511px;background:#535353;">
<div style="left:-0.4px;top:0px;width:152.4px;height:21px;background:#454545;"></div>
<div style="left:-0.4px;top:0px;width:152.4px;height:5.4px;background:#404040;"></div>
<svg style="left:144.6px;top:1.4px;" width="5" height="3" viewBox="0 0 5 3"><path d="M0.4 0.3L1.9 1.5L0.4 2.7M2.6 0.3L4.1 1.5L2.6 2.7" fill="none" stroke="#c8c8c8" stroke-width="0.7"/></svg>
<div class="tabs" style="left:0px;top:5px;width:152px;height:16px;">
<span class="t" style="left:4px;top:5px;font-size:5.2px;line-height:6px;color:#9c9c9c;font-weight:bold;transform:translate(0.11px,0.39px) scaleX(1.15);">P</span>
<div style="left:9.8px;top:0.4px;width:0.5px;height:15.6px;background:#3c3c3c;"></div>
<span class="t" style="left:12px;top:5px;font-size:5.2px;line-height:6px;color:#9c9c9c;font-weight:bold;transform:translate(0.14px,0.39px) scaleX(1);">C</span>
<div style="left:17.65px;top:0.4px;width:0.5px;height:15.6px;background:#3c3c3c;"></div>
<span class="t" style="left:19px;top:5px;font-size:5.2px;line-height:6px;color:#9c9c9c;font-weight:bold;transform:translate(0.81px,0.39px) scaleX(1.15);">P</span>
<div style="left:25.5px;top:0.4px;width:0.5px;height:15.6px;background:#3c3c3c;"></div>
<span class="t" style="left:27px;top:5px;font-size:5.2px;line-height:6px;color:#9c9c9c;font-weight:bold;transform:translate(0.66px,0.39px) scaleX(1.15);">P</span>
<div style="left:33.35px;top:0.4px;width:0.5px;height:15.6px;background:#3c3c3c;"></div>
<span class="t" style="left:35px;top:5px;font-size:5.2px;line-height:6px;color:#9c9c9c;font-weight:bold;transform:translate(0.69px,0.39px) scaleX(1);">C</span>
<div style="left:41.2px;top:0.4px;width:0.5px;height:15.6px;background:#3c3c3c;"></div>
<span class="t" style="left:43px;top:5px;font-size:5.2px;line-height:6px;color:#9c9c9c;font-weight:bold;transform:translate(0.54px,0.39px) scaleX(1);">C</span>
<div style="left:49.05px;top:0.4px;width:0.5px;height:15.6px;background:#3c3c3c;"></div>
<span class="t" style="left:51px;top:5px;font-size:5.2px;line-height:6px;color:#9c9c9c;font-weight:bold;transform:translate(0.23px,0.39px) scaleX(1.11);">H</span>
<div style="left:56.9px;top:0.4px;width:0.5px;height:15.6px;background:#3c3c3c;"></div>
<span class="t" style="left:59px;top:5px;font-size:5.2px;line-height:6px;color:#9c9c9c;font-weight:bold;transform:translate(0.02px,0.39px) scaleX(1.27);">L</span>
<div style="left:64.75px;top:0.4px;width:0.5px;height:15.6px;background:#3c3c3c;"></div>
<span class="t" style="left:66px;top:5px;font-size:5.2px;line-height:6px;color:#9c9c9c;font-weight:bold;transform:translate(0.91px,0.39px) scaleX(1.15);">P</span>
<div style="left:72.6px;top:0.4px;width:0.5px;height:15.6px;background:#3c3c3c;"></div>
<span class="t" style="left:74px;top:5px;font-size:5.2px;line-height:6px;color:#9c9c9c;font-weight:bold;transform:translate(0.98px,0.39px) scaleX(1.09);">S</span>
<div style="left:80.45px;top:0.4px;width:0.5px;height:15.6px;background:#3c3c3c;"></div>
<span class="t" style="left:82px;top:5px;font-size:5.2px;line-height:6px;color:#9c9c9c;font-weight:bold;transform:translate(0.79px,0.39px) scaleX(1);">C</span>
<div style="left:88.3px;top:0.4px;width:0.5px;height:15.6px;background:#3c3c3c;"></div>
<span class="t" style="left:90px;top:5px;font-size:5.2px;line-height:6px;color:#9c9c9c;font-weight:bold;transform:translate(0.72px,0.39px) scaleX(0.98);">A</span>
<div style="left:96.15px;top:0.4px;width:0.5px;height:15.6px;background:#3c3c3c;"></div>
<span class="t" style="left:98px;top:5px;font-size:5.2px;line-height:6px;color:#9c9c9c;font-weight:bold;transform:translate(0.53px,0.39px) scaleX(1.09);">S</span>
<div style="left:104px;top:0.4px;width:0.5px;height:15.6px;background:#3c3c3c;"></div>
<div style="left:103px;top:0.4px;width:24.4px;height:15.6px;background:#535353;"></div>
<span class="t" style="left:105px;top:5px;font-size:5.8px;line-height:6px;color:#ededed;font-weight:bold;transform:translate(0.93px,0.6px) scaleX(0.97);">Layers</span>
<svg style="left:143.6px;top:5.6px;" width="6" height="5" viewBox="0 0 6 5"><path d="M0 0.6H6M0 2.5H6M0 4.4H6" stroke="#a4a4a4" stroke-width="0.8"/></svg>
</div>
<div class="filter-row" style="left:0px;top:21px;width:152px;height:16.4px;">
<div style="left:2px;top:4.6px;width:46.4px;height:8.9px;background:#444;border:0.4px solid #6a6a6a;box-sizing:border-box;border-radius:1.4px;"></div>
<svg style="left:5.4px;top:5.75px;" width="6" height="6.4" viewBox="0 0 6 6.4"><circle cx="3.9" cy="2.4" r="1.65" fill="none" stroke="#e8e8e8" stroke-width="0.62"/><path d="M2.7 3.7L0.7 5.8" stroke="#e8e8e8" stroke-width="0.95" stroke-linecap="round"/></svg>
<span class="t" style="left:12px;top:5px;font-size:5.6px;line-height:6px;color:#efefef;transform:translate(0.95px,0.98px) scaleX(1);-webkit-text-stroke:0.12px #efefef;">Kind</span>
<svg style="left:42.6px;top:7.65px;" width="5" height="3.2" viewBox="0 0 5 3.2"><path d="M0.4 0.4L2.5 2.6L4.6 0.4" fill="none" stroke="#c8c8c8" stroke-width="0.55"/></svg>
<svg style="left:53.6px;top:5.6px;" width="8" height="7" viewBox="0 0 8 7"><rect x="0.5" y="0.5" width="7" height="5.6" rx="0.6" fill="none" stroke="#d6d6d6" stroke-width="0.8"/><path d="M1.6 5L3 3.2L4.2 4.4L5 3.6L6.4 5Z" fill="#d6d6d6"/></svg>
<svg style="left:66.4px;top:5.4px;" width="7.4" height="7.4" viewBox="0 0 7.4 7.4"><circle cx="3.7" cy="3.7" r="3" fill="none" stroke="#d6d6d6" stroke-width="0.8"/><path d="M1.6 5.8A3 3 0 0 1 5.8 1.6Z" fill="#d6d6d6"/></svg>
<span class="t" style="left:79px;top:4px;font-size:9px;line-height:10px;color:#d6d6d6;font-weight:bold;font-family:'Liberation Serif',serif;transform:translate(0.45px,0.25px) scaleX(1.12);">T</span>
<svg style="left:91.6px;top:5.4px;" width="7.6" height="7.6" viewBox="0 0 7.6 7.6"><rect x="1.4" y="1.4" width="4.8" height="4.8" fill="none" stroke="#d6d6d6" stroke-width="0.8"/><rect x="0.4" y="0.4" width="1.8" height="1.8" fill="#d6d6d6"/><rect x="5.4" y="0.4" width="1.8" height="1.8" fill="#d6d6d6"/><rect x="0.4" y="5.4" width="1.8" height="1.8" fill="#d6d6d6"/><rect x="5.4" y="5.4" width="1.8" height="1.8" fill="#d6d6d6"/></svg>
<svg style="left:104.4px;top:5px;" width="7.6" height="8" viewBox="0 0 7.6 8"><path d="M2.4 0.6H5.6L7 2V6.4H2.4Z" fill="none" stroke="#d6d6d6" stroke-width="0.8"/><rect x="0.4" y="4" width="3.6" height="3.4" rx="0.4" fill="#d6d6d6"/><path d="M1.2 4V3.2a1 1 0 0 1 2 0V4" fill="none" stroke="#d6d6d6" stroke-width="0.6"/></svg>
<div style="left:118px;top:5.4px;width:4px;height:7.6px;background:#3c3c3c;border-radius:2px;"></div>
<div style="left:118px;top:4.6px;width:4px;height:4px;background:#ececec;border-radius:50%;"></div>
</div>
<div style="left:-0.4px;top:37.3px;width:152.4px;height:0.5px;background:#454545;"></div>
<div class="blend-row" style="left:0px;top:38px;width:152px;height:13.6px;">
<div style="left:2px;top:2px;width:68px;height:8.8px;background:#4d4d4d;border:0.4px solid #5f5f5f;box-sizing:border-box;border-radius:1.4px;"></div>
<span class="t" style="left:5px;top:3px;font-size:5.6px;line-height:6px;color:#7c8085;transform:translate(0.78px,0.33px) scaleX(0.94);">Normal</span>
<svg style="left:63.6px;top:5px;" width="5" height="3.2" viewBox="0 0 5 3.2"><path d="M0.4 0.4L2.5 2.6L4.6 0.4" fill="none" stroke="#6a6a6a" stroke-width="0.55"/></svg>
<span class="t" style="left:73px;top:3px;font-size:5.8px;line-height:6px;color:#7c7c7c;transform:translate(0.75px,0.5px) scaleX(0.95);">Opacity:</span>
<div style="left:96px;top:2px;width:18px;height:8.8px;background:#4e4e4e;border:0.4px solid #5e5e5e;box-sizing:border-box;"></div>
<span class="t" style="left:98px;top:3px;font-size:5.6px;line-height:6px;color:#6f6f6f;transform:translate(0.64px,0.43px) scaleX(0.84);">100%</span>
<div style="left:114px;top:2px;width:7.4px;height:8.8px;background:#4e4e4e;border:0.4px solid #5e5e5e;box-sizing:border-box;"></div>
<svg style="left:115.8px;top:5.2px;" width="4.2" height="2.8" viewBox="0 0 4.2 2.8"><path d="M0.4 0.4L2.1 2.1L3.8 0.4" fill="none" stroke="#6e6e6e" stroke-width="0.6"/></svg>
</div>
<div style="left:-0.4px;top:51.6px;width:152.4px;height:0.5px;background:#454545;"></div>
<div class="lock-row" style="left:0px;top:52px;width:152px;height:14.3px;">
<span class="t" style="left:2px;top:3px;font-size:5.6px;line-height:6px;color:#e2e2e2;transform:translate(0.46px,0.73px) scaleX(0.97);-webkit-text-stroke:0.1px #e2e2e2;">Lock:</span>
<svg style="left:19.8px;top:3.6px;" width="6.4" height="6.4" viewBox="0 0 6.4 6.4"><rect x="0.4" y="0.4" width="5.6" height="5.6" fill="none" stroke="#c4c4c4" stroke-width="0.6"/><rect x="0.8" y="0.8" width="1.6" height="1.6" fill="#c4c4c4"/><rect x="4" y="0.8" width="1.6" height="1.6" fill="#c4c4c4"/><rect x="2.4" y="2.4" width="1.6" height="1.6" fill="#c4c4c4"/><rect x="0.8" y="4" width="1.6" height="1.6" fill="#c4c4c4"/><rect x="4" y="4" width="1.6" height="1.6" fill="#c4c4c4"/></svg>
<svg style="left:31px;top:3px;" width="7.4" height="7.6" viewBox="0 0 7.4 7.6"><path d="M7 0.2L7.4 0.6L4.7 5L3.5 4Z" fill="#909090"/><path d="M3.2 4.3L4.4 5.3C4 6.9 2.2 7.5 0.3 7.2C1.4 6.5 1.5 4.8 3.2 4.3Z" fill="#909090"/></svg>
<svg style="left:42.4px;top:3.2px;" width="7.2" height="7.2" viewBox="0 0 7.2 7.2"><path d="M3.6 0.2L4.8 1.7H4V3.2H5.5V2.4L7 3.6L5.5 4.8V4H4V5.5H4.8L3.6 7L2.4 5.5H3.2V4H1.7V4.8L0.2 3.6L1.7 2.4V3.2H3.2V1.7H2.4Z" fill="#b4b4b4"/></svg>
<svg style="left:54px;top:3.4px;" width="8" height="7" viewBox="0 0 8 7"><path d="M1.2 0.25V6.5M0 1.45H5L6.1 2.9V6.5M0 5.45H7.5" fill="none" stroke="#a2a2a2" stroke-width="0.6"/><path d="M6 0.6L7.4 1.8" stroke="#a2a2a2" stroke-width="0.5" stroke-dasharray="0.5 0.45"/></svg>
<div style="left:63.8px;top:1.2px;width:10.7px;height:11.6px;background:#373737;border-radius:1.3px;border:0.4px solid #5a5a5a;box-sizing:border-box;"></div>
<svg style="left:66.3px;top:2.9px;" width="6" height="7.6" viewBox="0 0 6 7.6"><path d="M1.5 3.4V2.3a1.5 1.5 0 0 1 3 0V3.4" fill="none" stroke="#f0f0f0" stroke-width="0.8"/><rect x="0.5" y="3.3" width="5" height="3.9" rx="0.4" fill="#f0f0f0"/><rect x="2.6" y="4.6" width="0.8" height="1.2" fill="#333"/></svg>
<span class="t" style="left:85px;top:3px;font-size:5.8px;line-height:6px;color:#7c7c7c;transform:translate(0.62px,0.9px) scaleX(0.82);">Fill:</span>
<div style="left:96px;top:2.6px;width:18px;height:8.8px;background:#4e4e4e;border:0.4px solid #5e5e5e;box-sizing:border-box;"></div>
<span class="t" style="left:98px;top:4px;font-size:5.6px;line-height:6px;color:#6f6f6f;transform:translate(0.64px,0.03px) scaleX(0.84);">100%</span>
<div style="left:114px;top:2.6px;width:7.4px;height:8.8px;background:#4e4e4e;border:0.4px solid #5e5e5e;box-sizing:border-box;"></div>
<svg style="left:115.8px;top:5.8px;" width="4.2" height="2.8" viewBox="0 0 4.2 2.8"><path d="M0.4 0.4L2.1 2.1L3.8 0.4" fill="none" stroke="#6e6e6e" stroke-width="0.6"/></svg>
</div>
<div class="layers" style="left:0px;top:66px;width:152px;height:432.7px;background:#515151;">
<div style="left:145.4px;top:0.5px;width:6.6px;height:432.2px;background:#4a4a4a;"></div>
<div class="layer" style="left:0px;top:0px;width:145.4px;height:17.25px;background:#535353;">
<div style="left:-0.4px;top:0.5px;width:145.8px;height:0.5px;background:#464646;"></div>
<div style="left:-0.4px;top:1px;width:15.9px;height:16.25px;background:#535353;"></div>
<div style="left:15.5px;top:0.5px;width:0.5px;height:16.75px;background:#474747;"></div>
<svg style="left:4.1px;top:6.17px;" width="7.6" height="5.6" viewBox="0 0 7.6 5.6"><path d="M0.1 2.8Q3.8 -2 7.5 2.8Q3.8 7.6 0.1 2.8Z" fill="#e4e4e4"/><circle cx="3.8" cy="2.7" r="1.5" fill="#4a4a4a"/><circle cx="4.35" cy="2.2" r="0.42" fill="#d8d8d8"/></svg>
<div class="thumb" style="left:18px;top:2px;width:16.5px;height:13.2px;background-color:#fff;background-image:linear-gradient(45deg,#c9c9c9 25%,transparent 25%,transparent 75%,#c9c9c9 75%),linear-gradient(45deg,#c9c9c9 25%,transparent 25%,transparent 75%,#c9c9c9 75%);background-size:4.1px 4.1px;background-position:0 0,2.05px 2.05px;overflow:hidden;">
</div>
<span class="t" style="left:39px;top:5px;font-size:5.6px;line-height:6px;color:#e8e8e8;transform:translate(0.08px,0.91px) scaleX(0.94);-webkit-text-stroke:0.1px #e8e8e8;">Die Cut</span>
<svg style="left:131.4px;top:5.47px;" width="5.2" height="6.8" viewBox="0 0 5.2 6.8"><path d="M1.3 3V2a1.3 1.3 0 0 1 2.6 0V3" fill="none" stroke="#cfcfcf" stroke-width="0.7"/><rect x="0.5" y="3" width="4.2" height="3.4" rx="0.5" fill="none" stroke="#cfcfcf" stroke-width="0.7"/><rect x="2.2" y="4.1" width="0.8" height="1.2" fill="#cfcfcf"/></svg>
</div>
<div class="layer" style="left:0px;top:17px;width:145.4px;height:17px;background:#535353;">
<div style="left:-0.4px;top:0.25px;width:145.8px;height:0.5px;background:#464646;"></div>
<div style="left:-0.4px;top:0.75px;width:15.9px;height:16.25px;background:#535353;"></div>
<div style="left:15.5px;top:0.25px;width:0.5px;height:16.75px;background:#474747;"></div>
<svg style="left:4.1px;top:5.92px;" width="7.6" height="5.6" viewBox="0 0 7.6 5.6"><path d="M0.1 2.8Q3.8 -2 7.5 2.8Q3.8 7.6 0.1 2.8Z" fill="#e4e4e4"/><circle cx="3.8" cy="2.7" r="1.5" fill="#4a4a4a"/><circle cx="4.35" cy="2.2" r="0.42" fill="#d8d8d8"/></svg>
<div class="thumb" style="left:18px;top:2px;width:16.5px;height:12.95px;background-color:#fff;background-image:linear-gradient(45deg,#c9c9c9 25%,transparent 25%,transparent 75%,#c9c9c9 75%),linear-gradient(45deg,#c9c9c9 25%,transparent 25%,transparent 75%,#c9c9c9 75%);background-size:4.1px 4.1px;background-position:0 0,2.05px 2.05px;overflow:hidden;">
<div style="left:7.5px;top:0.25px;width:1px;height:12.7px;background:#707070;"></div>
</div>
<span class="t" style="left:39px;top:5px;font-size:5.6px;line-height:6px;color:#e8e8e8;transform:translate(0.27px,0.66px) scaleX(0.9);-webkit-text-stroke:0.1px #e8e8e8;">Safe Area</span>
<svg style="left:131.4px;top:5.22px;" width="5.2" height="6.8" viewBox="0 0 5.2 6.8"><path d="M1.3 3V2a1.3 1.3 0 0 1 2.6 0V3" fill="none" stroke="#cfcfcf" stroke-width="0.7"/><rect x="0.5" y="3" width="4.2" height="3.4" rx="0.5" fill="none" stroke="#cfcfcf" stroke-width="0.7"/><rect x="2.2" y="4.1" width="0.8" height="1.2" fill="#cfcfcf"/></svg>
</div>
<div class="layer" style="left:0px;top:34px;width:145.4px;height:16.75px;background:#535353;">
<div style="left:-0.4px;top:0px;width:145.8px;height:0.5px;background:#464646;"></div>
<div style="left:-0.4px;top:0.5px;width:15.9px;height:16.25px;background:#a98b0c;"></div>
<div style="left:15.5px;top:0px;width:0.5px;height:16.75px;background:#474747;"></div>
<svg style="left:4.1px;top:5.67px;" width="7.6" height="5.6" viewBox="0 0 7.6 5.6"><path d="M0.1 2.8Q3.8 -2 7.5 2.8Q3.8 7.6 0.1 2.8Z" fill="#e4e4e4"/><circle cx="3.8" cy="2.7" r="1.5" fill="#4a4a4a"/><circle cx="4.35" cy="2.2" r="0.42" fill="#d8d8d8"/></svg>
<div class="thumb" style="left:18px;top:2px;width:16.5px;height:12.7px;background-color:#fff;background-image:linear-gradient(45deg,#c9c9c9 25%,transparent 25%,transparent 75%,#c9c9c9 75%),linear-gradient(45deg,#c9c9c9 25%,transparent 25%,transparent 75%,#c9c9c9 75%);background-size:4.1px 4.1px;background-position:0 0,2.05px 2.05px;overflow:hidden;">
<div style="left:4.9px;top:9.6px;width:2.4px;height:1.6px;background:#f2e21c;"></div>
</div>
<span class="t" style="left:39px;top:5px;font-size:5.6px;line-height:6px;color:#e8e8e8;transform:translate(0.09px,0.41px) scaleX(0.91);-webkit-text-stroke:0.1px #e8e8e8;">Barcode Location</span>
<svg style="left:131.4px;top:4.97px;" width="5.2" height="6.8" viewBox="0 0 5.2 6.8"><path d="M1.3 3V2a1.3 1.3 0 0 1 2.6 0V3" fill="none" stroke="#cfcfcf" stroke-width="0.7"/><rect x="0.5" y="3" width="4.2" height="3.4" rx="0.5" fill="none" stroke="#cfcfcf" stroke-width="0.7"/><rect x="2.2" y="4.1" width="0.8" height="1.2" fill="#cfcfcf"/></svg>
</div>
<div class="layer" style="left:0px;top:51px;width:145.4px;height:16.5px;background:#535353;">
<div style="left:-0.4px;top:-0.25px;width:145.8px;height:0.5px;background:#464646;"></div>
<div style="left:-0.4px;top:0.25px;width:15.9px;height:16.25px;background:#535353;"></div>
<div style="left:15.5px;top:-0.25px;width:0.5px;height:16.75px;background:#474747;"></div>
<svg style="left:4.1px;top:5.42px;" width="7.6" height="5.6" viewBox="0 0 7.6 5.6"><path d="M0.1 2.8Q3.8 -2 7.5 2.8Q3.8 7.6 0.1 2.8Z" fill="#e4e4e4"/><circle cx="3.8" cy="2.7" r="1.5" fill="#4a4a4a"/><circle cx="4.35" cy="2.2" r="0.42" fill="#d8d8d8"/></svg>
<div class="thumb" style="left:18px;top:2px;width:16.5px;height:12.45px;background-color:#fff;background-image:linear-gradient(45deg,#c9c9c9 25%,transparent 25%,transparent 75%,#c9c9c9 75%),linear-gradient(45deg,#c9c9c9 25%,transparent 25%,transparent 75%,#c9c9c9 75%);background-size:4.1px 4.1px;background-position:0 0,2.05px 2.05px;overflow:hidden;">
<div style="left:7.9px;top:-0.25px;width:8.6px;height:12.7px;background:#fd8c0f;"></div>
</div>
<div style="left:27.3px;top:7.75px;width:7.4px;height:6.9px;background:#535353;border-left:0.5px solid #20242c;border-top:0.5px solid #20242c;box-sizing:border-box;"></div>
<svg style="left:28px;top:8.65px;" width="5.5" height="6.3" viewBox="0 0 5.5 6.3"><path d="M1.15 0H3.75L5.5 1.6V5.4H1.15Z" fill="#e6e6e6"/><path d="M3.75 0L5.5 1.6H3.75Z" fill="#b4b4b4"/><rect x="2.4" y="1.2" width="2" height="3.1" fill="#4c4c4c"/><rect x="0.15" y="3.45" width="2.65" height="2.7" fill="#e8e8e8" stroke="#505050" stroke-width="0.3"/></svg>
<span class="t" style="left:39px;top:5px;font-size:5.6px;line-height:6px;color:#e8e8e8;transform:translate(0.09px,0.16px) scaleX(0.93);-webkit-text-stroke:0.1px #e8e8e8;">Front Cover (Put Your Design Here)</span>
</div>
<div class="layer" style="left:0px;top:68px;width:145.4px;height:16.25px;background:#535353;">
<div style="left:-0.4px;top:-0.5px;width:145.8px;height:0.5px;background:#464646;"></div>
<div style="left:-0.4px;top:0px;width:15.9px;height:16.25px;background:#535353;"></div>
<div style="left:15.5px;top:-0.5px;width:0.5px;height:16.75px;background:#474747;"></div>
<svg style="left:4.1px;top:5.17px;" width="7.6" height="5.6" viewBox="0 0 7.6 5.6"><path d="M0.1 2.8Q3.8 -2 7.5 2.8Q3.8 7.6 0.1 2.8Z" fill="#e4e4e4"/><circle cx="3.8" cy="2.7" r="1.5" fill="#4a4a4a"/><circle cx="4.35" cy="2.2" r="0.42" fill="#d8d8d8"/></svg>
<div class="thumb" style="left:18px;top:2px;width:16.5px;height:12.2px;background-color:#fff;background-image:linear-gradient(45deg,#c9c9c9 25%,transparent 25%,transparent 75%,#c9c9c9 75%),linear-gradient(45deg,#c9c9c9 25%,transparent 25%,transparent 75%,#c9c9c9 75%);background-size:4.1px 4.1px;background-position:0 0,2.05px 2.05px;overflow:hidden;">
<div style="left:-0.3px;top:-0.5px;width:8.2px;height:12.7px;background:#fca52b;"></div>
<div style="left:7.9px;top:-0.5px;width:0.8px;height:12.7px;background:#f4f4f4;"></div>
</div>
<div style="left:27.3px;top:7.5px;width:7.4px;height:6.9px;background:#535353;border-left:0.5px solid #20242c;border-top:0.5px solid #20242c;box-sizing:border-box;"></div>
<svg style="left:28px;top:8.4px;" width="5.5" height="6.3" viewBox="0 0 5.5 6.3"><path d="M1.15 0H3.75L5.5 1.6V5.4H1.15Z" fill="#e6e6e6"/><path d="M3.75 0L5.5 1.6H3.75Z" fill="#b4b4b4"/><rect x="2.4" y="1.2" width="2" height="3.1" fill="#4c4c4c"/><rect x="0.15" y="3.45" width="2.65" height="2.7" fill="#e8e8e8" stroke="#505050" stroke-width="0.3"/></svg>
<span class="t" style="left:39px;top:4px;font-size:5.6px;line-height:6px;color:#e8e8e8;transform:translate(0.08px,0.91px) scaleX(0.94);-webkit-text-stroke:0.1px #e8e8e8;">Back Cover  (Put Your Design Here)</span>
</div>
<div class="layer" style="left:0px;top:84px;width:145.4px;height:17px;background:#6b6b6b;">
<div style="left:-0.4px;top:0.25px;width:145.8px;height:0.5px;background:#464646;"></div>
<div style="left:-0.4px;top:0.75px;width:15.9px;height:16.25px;background:#535353;"></div>
<div style="left:15.5px;top:0.25px;width:0.5px;height:16.75px;background:#474747;"></div>
<svg style="left:4.1px;top:5.92px;" width="7.6" height="5.6" viewBox="0 0 7.6 5.6"><path d="M0.1 2.8Q3.8 -2 7.5 2.8Q3.8 7.6 0.1 2.8Z" fill="#e4e4e4"/><circle cx="3.8" cy="2.7" r="1.5" fill="#4a4a4a"/><circle cx="4.35" cy="2.2" r="0.42" fill="#d8d8d8"/></svg>
<div style="left:16.4px;top:0.95px;width:19.4px;height:15.3px;background:transparent;border:0.85px solid #f4f4f4;box-sizing:border-box;"></div>
<div style="left:22.7px;top:0.75px;width:6.8px;height:15.7px;background:#6b6b6b;"></div>
<div style="left:16.2px;top:5.45px;width:19.8px;height:6.3px;background:#6b6b6b;"></div>
<div style="left:17.7px;top:2.25px;width:16.8px;height:12.7px;background:#fff;border:0.8px solid #1e1e1e;box-sizing:border-box;"></div>
<span class="t" style="left:39px;top:5px;font-size:5.6px;line-height:6px;color:#e8e8e8;transform:translate(0.09px,0.66px) scaleX(0.92);-webkit-text-stroke:0.1px #e8e8e8;">Layer</span>
<svg style="left:131.4px;top:5.22px;" width="5.2" height="6.8" viewBox="0 0 5.2 6.8"><path d="M1.3 3V2a1.3 1.3 0 0 1 2.6 0V3" fill="none" stroke="#f4f4f4" stroke-width="0.8"/><rect x="0.3" y="2.9" width="4.6" height="3.6" rx="0.5" fill="#f4f4f4"/><rect x="2.2" y="4.1" width="0.8" height="1.2" fill="#555"/></svg>
</div>
<div style="left:-0.4px;top:101px;width:145.8px;height:0.5px;background:#464646;"></div>
</div>
<div class="panel-footer" style="left:0px;top:499px;width:152px;height:12px;background:#535353;">
<div style="left:-0.4px;top:-0.3px;width:152.4px;height:0.5px;background:#454545;"></div>
<svg style="left:47.6px;top:4.4px;" width="7" height="3.6" viewBox="0 0 7 3.6"><rect x="0.4" y="0.5" width="3" height="2.6" rx="1.2" fill="none" stroke="#8e8e8e" stroke-width="0.7"/><rect x="3.6" y="0.5" width="3" height="2.6" rx="1.2" fill="none" stroke="#8e8e8e" stroke-width="0.7"/></svg>
<span class="t" style="left:61px;top:2px;font-size:6.6px;line-height:7px;color:#9a9a9a;font-style:italic;font-family:'Liberation Serif',serif;transform:translate(0.91px,0.16px) scaleX(1.29);">fx</span>
<svg style="left:74.8px;top:3.4px;" width="7.4" height="5.6" viewBox="0 0 7.4 5.6"><rect x="0" y="0" width="7.4" height="5.6" fill="#b8b8b8"/><circle cx="3.7" cy="2.8" r="1.7" fill="#535353"/></svg>
<svg style="left:89.8px;top:3.2px;" width="6.4" height="6.4" viewBox="0 0 6.4 6.4"><circle cx="3.2" cy="3.2" r="2.7" fill="none" stroke="#b8b8b8" stroke-width="0.8"/><path d="M1.3 5.1A2.7 2.7 0 0 1 5.1 1.3Z" fill="#b8b8b8"/></svg>
<svg style="left:103.4px;top:3.4px;" width="7.4" height="5.6" viewBox="0 0 7.4 5.6"><path d="M0 0H2.8L3.6 0.9H7.4V5.6H0Z" fill="#b8b8b8"/></svg>
<svg style="left:117.8px;top:3.2px;" width="6.4" height="6.4" viewBox="0 0 6.4 6.4"><path d="M0.5 0.5H5.9V5.9H2.4L0.5 4Z" fill="none" stroke="#b8b8b8" stroke-width="0.8"/><path d="M0.5 4H2.4V5.9" fill="#b8b8b8"/></svg>
<svg style="left:132.2px;top:3px;" width="5.6" height="6.6" viewBox="0 0 5.6 6.6"><path d="M0.2 1.3H5.4M2 1.3V0.4H3.6V1.3" fill="none" stroke="#8a8a8a" stroke-width="0.7"/><path d="M0.8 2H4.8L4.4 6.4H1.2Z" fill="#8a8a8a"/></svg>
</div>
</div>
</div>
<div class="mag" style="left:660px;top:139px;width:380px;height:380px;border-radius:50%;overflow:hidden;background:#282828;">
<div class="zoom" style="left:0px;top:0px;width:380px;height:380px;">
<div style="left:0px;top:0px;width:105.74px;height:380px;background:#282828;"></div>
<div style="left:0px;top:73.9px;width:105.74px;height:2.24px;background:#3fd2d8;"></div>
<div style="left:0px;top:87.07px;width:105.74px;height:2.24px;background:#3fd2d8;"></div>
<div style="left:105.74px;top:0px;width:23.86px;height:380px;background:#4a4a4a;"></div>
<div style="left:127.12px;top:0px;width:2.48px;height:380px;background:#454545;"></div>
<div class="panel" style="left:130px;top:-58px;width:378.31px;height:1270.28px;background:#535353;">
<div style="left:-0.4px;top:0.45px;width:378.71px;height:52.18px;background:#454545;"></div>
<div style="left:-0.4px;top:0.45px;width:378.71px;height:13.42px;background:#404040;"></div>
<svg style="left:359.93px;top:3.93px;" width="12.42" height="7.46" viewBox="0 0 5 3"><path d="M0.4 0.3L1.9 1.5L0.4 2.7M2.6 0.3L4.1 1.5L2.6 2.7" fill="none" stroke="#c8c8c8" stroke-width="0.7"/></svg>
<div class="tabs" style="left:0px;top:14px;width:378.31px;height:38.63px;">
<span class="t" style="left:10px;top:12px;font-size:12.92px;line-height:15px;color:#9c9c9c;font-weight:bold;transform:translate(0.81px,0.7px) scaleX(1.15);">P</span>
<div style="left:24.95px;top:-0.13px;width:1.24px;height:38.77px;background:#3c3c3c;"></div>
<span class="t" style="left:30px;top:12px;font-size:12.92px;line-height:15px;color:#9c9c9c;font-weight:bold;transform:translate(0.77px,0.7px) scaleX(1);">C</span>
<div style="left:44.45px;top:-0.13px;width:1.24px;height:38.77px;background:#3c3c3c;"></div>
<span class="t" style="left:49px;top:12px;font-size:12.92px;line-height:15px;color:#9c9c9c;font-weight:bold;transform:translate(0.83px,0.7px) scaleX(1.15);">P</span>
<div style="left:63.96px;top:-0.13px;width:1.24px;height:38.77px;background:#3c3c3c;"></div>
<span class="t" style="left:69px;top:12px;font-size:12.92px;line-height:15px;color:#9c9c9c;font-weight:bold;transform:translate(0.33px,0.7px) scaleX(1.15);">P</span>
<div style="left:83.47px;top:-0.13px;width:1.24px;height:38.77px;background:#3c3c3c;"></div>
<span class="t" style="left:89px;top:12px;font-size:12.92px;line-height:15px;color:#9c9c9c;font-weight:bold;transform:translate(0.29px,0.7px) scaleX(1);">C</span>
<div style="left:102.98px;top:-0.13px;width:1.24px;height:38.77px;background:#3c3c3c;"></div>
<span class="t" style="left:108px;top:12px;font-size:12.92px;line-height:15px;color:#9c9c9c;font-weight:bold;transform:translate(0.8px,0.7px) scaleX(1);">C</span>
<div style="left:122.48px;top:-0.13px;width:1.24px;height:38.77px;background:#3c3c3c;"></div>
<span class="t" style="left:127px;top:12px;font-size:12.92px;line-height:15px;color:#9c9c9c;font-weight:bold;transform:translate(0.89px,0.7px) scaleX(1.11);">H</span>
<div style="left:141.99px;top:-0.13px;width:1.24px;height:38.77px;background:#3c3c3c;"></div>
<span class="t" style="left:147px;top:12px;font-size:12.92px;line-height:15px;color:#9c9c9c;font-weight:bold;transform:translate(0.26px,0.7px) scaleX(1.27);">L</span>
<div style="left:161.5px;top:-0.13px;width:1.24px;height:38.77px;background:#3c3c3c;"></div>
<span class="t" style="left:166px;top:12px;font-size:12.92px;line-height:15px;color:#9c9c9c;font-weight:bold;transform:translate(0.87px,0.7px) scaleX(1.15);">P</span>
<div style="left:181.01px;top:-0.13px;width:1.24px;height:38.77px;background:#3c3c3c;"></div>
<span class="t" style="left:186px;top:12px;font-size:12.92px;line-height:15px;color:#9c9c9c;font-weight:bold;transform:translate(0.92px,0.7px) scaleX(1.09);">S</span>
<div style="left:200.51px;top:-0.13px;width:1.24px;height:38.77px;background:#3c3c3c;"></div>
<span class="t" style="left:206px;top:12px;font-size:12.92px;line-height:15px;color:#9c9c9c;font-weight:bold;transform:translate(0.33px,0.7px) scaleX(1);">C</span>
<div style="left:220.02px;top:-0.13px;width:1.24px;height:38.77px;background:#3c3c3c;"></div>
<span class="t" style="left:226px;top:12px;font-size:12.92px;line-height:15px;color:#9c9c9c;font-weight:bold;transform:translate(0.04px,0.7px) scaleX(0.98);">A</span>
<div style="left:239.53px;top:-0.13px;width:1.24px;height:38.77px;background:#3c3c3c;"></div>
<span class="t" style="left:245px;top:12px;font-size:12.92px;line-height:15px;color:#9c9c9c;font-weight:bold;transform:translate(0.44px,0.7px) scaleX(1.09);">S</span>
<div style="left:259.03px;top:-0.13px;width:1.24px;height:38.77px;background:#3c3c3c;"></div>
<div style="left:256.55px;top:-0.13px;width:60.63px;height:38.77px;background:#535353;"></div>
<span class="t" style="left:263px;top:12px;font-size:14.41px;line-height:16px;color:#ededed;font-weight:bold;transform:translate(0.84px,0.22px) scaleX(0.97);">Layers</span>
<svg style="left:357.44px;top:12.79px;" width="14.91" height="12.42" viewBox="0 0 6 5"><path d="M0 0.6H6M0 2.5H6M0 4.4H6" stroke="#a4a4a4" stroke-width="0.8"/></svg>
</div>
<div class="filter-row" style="left:0px;top:53px;width:378.31px;height:40.39px;">
<div style="left:5.56px;top:12.43px;width:115.3px;height:22.74px;background:#444;border:0.99px solid #6a6a6a;box-sizing:border-box;border-radius:3.48px;"></div>
<svg style="left:14.01px;top:15.6px;" width="14.91" height="15.9" viewBox="0 0 6 6.4"><circle cx="3.9" cy="2.4" r="1.65" fill="none" stroke="#e8e8e8" stroke-width="0.62"/><path d="M2.7 3.7L0.7 5.8" stroke="#e8e8e8" stroke-width="0.95" stroke-linecap="round"/></svg>
<span class="t" style="left:32px;top:15px;font-size:13.92px;line-height:16px;color:#efefef;transform:translate(0.78px,0.6px) scaleX(1);-webkit-text-stroke:0.3px #efefef;">Kind</span>
<svg style="left:106.46px;top:20.32px;" width="12.42" height="7.95" viewBox="0 0 5 3.2"><path d="M0.4 0.4L2.5 2.6L4.6 0.4" fill="none" stroke="#c8c8c8" stroke-width="0.55"/></svg>
<svg style="left:133.79px;top:13.55px;" width="19.88" height="17.39" viewBox="0 0 8 7"><rect x="0.5" y="0.5" width="7" height="5.6" rx="0.6" fill="none" stroke="#d6d6d6" stroke-width="0.8"/><path d="M1.6 5L3 3.2L4.2 4.4L5 3.6L6.4 5Z" fill="#d6d6d6"/></svg>
<svg style="left:165.6px;top:13.05px;" width="18.39" height="18.39" viewBox="0 0 7.4 7.4"><circle cx="3.7" cy="3.7" r="3" fill="none" stroke="#d6d6d6" stroke-width="0.8"/><path d="M1.6 5.8A3 3 0 0 1 5.8 1.6Z" fill="#d6d6d6"/></svg>
<span class="t" style="left:198px;top:10px;font-size:22.36px;line-height:25px;color:#d6d6d6;font-weight:bold;font-family:'Liberation Serif',serif;transform:translate(0.02px,0.07px) scaleX(1.12);">T</span>
<svg style="left:228.22px;top:13.05px;" width="18.89" height="18.89" viewBox="0 0 7.6 7.6"><rect x="1.4" y="1.4" width="4.8" height="4.8" fill="none" stroke="#d6d6d6" stroke-width="0.8"/><rect x="0.4" y="0.4" width="1.8" height="1.8" fill="#d6d6d6"/><rect x="5.4" y="0.4" width="1.8" height="1.8" fill="#d6d6d6"/><rect x="0.4" y="5.4" width="1.8" height="1.8" fill="#d6d6d6"/><rect x="5.4" y="5.4" width="1.8" height="1.8" fill="#d6d6d6"/></svg>
<svg style="left:260.03px;top:12.06px;" width="18.89" height="19.88" viewBox="0 0 7.6 8"><path d="M2.4 0.6H5.6L7 2V6.4H2.4Z" fill="none" stroke="#d6d6d6" stroke-width="0.8"/><rect x="0.4" y="4" width="3.6" height="3.4" rx="0.4" fill="#d6d6d6"/><path d="M1.2 4V3.2a1 1 0 0 1 2 0V4" fill="none" stroke="#d6d6d6" stroke-width="0.6"/></svg>
<div style="left:293.82px;top:13.05px;width:9.94px;height:18.89px;background:#3c3c3c;border-radius:4.97px;"></div>
<div style="left:293.82px;top:11.06px;width:9.94px;height:9.94px;background:#ececec;border-radius:50%;"></div>
</div>
<div style="left:-0.4px;top:93.63px;width:378.71px;height:1.24px;background:#454545;"></div>
<div class="blend-row" style="left:0px;top:94px;width:378.31px;height:34.67px;">
<div style="left:5.56px;top:6.1px;width:168.98px;height:23.36px;background:#4d4d4d;border:0.99px solid #5f5f5f;box-sizing:border-box;border-radius:3.48px;"></div>
<span class="t" style="left:14px;top:9px;font-size:13.92px;line-height:16px;color:#7c8085;transform:translate(0.96px,0.58px) scaleX(0.94);">Normal</span>
<svg style="left:158.64px;top:14.3px;" width="12.42" height="7.95" viewBox="0 0 5 3.2"><path d="M0.4 0.4L2.5 2.6L4.6 0.4" fill="none" stroke="#6a6a6a" stroke-width="0.55"/></svg>
<span class="t" style="left:183px;top:9px;font-size:14.41px;line-height:16px;color:#7c7c7c;transform:translate(0.87px,0px) scaleX(0.95);">Opacity:</span>
<div style="left:239.15px;top:5.85px;width:44.73px;height:21.87px;background:#4e4e4e;border:0.99px solid #5e5e5e;box-sizing:border-box;"></div>
<span class="t" style="left:245px;top:8px;font-size:13.92px;line-height:16px;color:#6f6f6f;transform:translate(0.73px,0.83px) scaleX(0.84);">100%</span>
<div style="left:283.88px;top:5.85px;width:18.39px;height:21.87px;background:#4e4e4e;border:0.99px solid #5e5e5e;box-sizing:border-box;"></div>
<svg style="left:288.36px;top:13.8px;" width="10.44" height="6.96" viewBox="0 0 4.2 2.8"><path d="M0.4 0.4L2.1 2.1L3.8 0.4" fill="none" stroke="#6e6e6e" stroke-width="0.6"/></svg>
</div>
<div style="left:-0.4px;top:129.17px;width:378.71px;height:1.24px;background:#454545;"></div>
<div class="lock-row" style="left:0px;top:130px;width:378.31px;height:35.2px;">
<span class="t" style="left:6px;top:8px;font-size:13.92px;line-height:16px;color:#e2e2e2;transform:translate(0.71px,0.37px) scaleX(0.97);-webkit-text-stroke:0.25px #e2e2e2;">Lock:</span>
<svg style="left:49.8px;top:8.61px;" width="15.9" height="15.9" viewBox="0 0 6.4 6.4"><rect x="0.4" y="0.4" width="5.6" height="5.6" fill="none" stroke="#c4c4c4" stroke-width="0.6"/><rect x="0.8" y="0.8" width="1.6" height="1.6" fill="#c4c4c4"/><rect x="4" y="0.8" width="1.6" height="1.6" fill="#c4c4c4"/><rect x="2.4" y="2.4" width="1.6" height="1.6" fill="#c4c4c4"/><rect x="0.8" y="4" width="1.6" height="1.6" fill="#c4c4c4"/><rect x="4" y="4" width="1.6" height="1.6" fill="#c4c4c4"/></svg>
<svg style="left:77.63px;top:7.12px;" width="18.39" height="18.89" viewBox="0 0 7.4 7.6"><path d="M7 0.2L7.4 0.6L4.7 5L3.5 4Z" fill="#909090"/><path d="M3.2 4.3L4.4 5.3C4 6.9 2.2 7.5 0.3 7.2C1.4 6.5 1.5 4.8 3.2 4.3Z" fill="#909090"/></svg>
<svg style="left:105.96px;top:7.62px;" width="17.89" height="17.89" viewBox="0 0 7.2 7.2"><path d="M3.6 0.2L4.8 1.7H4V3.2H5.5V2.4L7 3.6L5.5 4.8V4H4V5.5H4.8L3.6 7L2.4 5.5H3.2V4H1.7V4.8L0.2 3.6L1.7 2.4V3.2H3.2V1.7H2.4Z" fill="#b4b4b4"/></svg>
<svg style="left:134.78px;top:8.12px;" width="19.88" height="17.39" viewBox="0 0 8 7"><path d="M1.2 0.25V6.5M0 1.45H5L6.1 2.9V6.5M0 5.45H7.5" fill="none" stroke="#a2a2a2" stroke-width="0.6"/><path d="M6 0.6L7.4 1.8" stroke="#a2a2a2" stroke-width="0.5" stroke-dasharray="0.5 0.45"/></svg>
<div style="left:159.14px;top:2.65px;width:26.59px;height:28.83px;background:#373737;border-radius:3.23px;border:0.99px solid #5a5a5a;box-sizing:border-box;"></div>
<svg style="left:165.35px;top:6.87px;" width="14.91" height="18.89" viewBox="0 0 6 7.6"><path d="M1.5 3.4V2.3a1.5 1.5 0 0 1 3 0V3.4" fill="none" stroke="#f0f0f0" stroke-width="0.8"/><rect x="0.5" y="3.3" width="5" height="3.9" rx="0.4" fill="#f0f0f0"/><rect x="2.6" y="4.6" width="0.8" height="1.2" fill="#333"/></svg>
<span class="t" style="left:213px;top:8px;font-size:14.41px;line-height:16px;color:#7c7c7c;transform:translate(0.35px,0.79px) scaleX(0.82);">Fill:</span>
<div style="left:239.15px;top:6.13px;width:44.73px;height:21.87px;background:#4e4e4e;border:0.99px solid #5e5e5e;box-sizing:border-box;"></div>
<span class="t" style="left:245px;top:9px;font-size:13.92px;line-height:16px;color:#6f6f6f;transform:translate(0.73px,0.11px) scaleX(0.84);">100%</span>
<div style="left:283.88px;top:6.13px;width:18.39px;height:21.87px;background:#4e4e4e;border:0.99px solid #5e5e5e;box-sizing:border-box;"></div>
<svg style="left:288.36px;top:14.08px;" width="10.44" height="6.96" viewBox="0 0 4.2 2.8"><path d="M0.4 0.4L2.1 2.1L3.8 0.4" fill="none" stroke="#6e6e6e" stroke-width="0.6"/></svg>
</div>
<div class="layers" style="left:0px;top:165px;width:378.31px;height:1074.72px;background:#4e4e4e;">
<div style="left:361.91px;top:0px;width:16.4px;height:1074.71px;background:#4a4a4a;"></div>
<div class="layer" style="left:0px;top:0px;width:361.91px;height:41.68px;background:#535353;">
<div style="left:-0.4px;top:0px;width:362.31px;height:1.24px;background:#464646;"></div>
<div style="left:-0.4px;top:1.25px;width:39.51px;height:40.43px;background:#535353;"></div>
<div style="left:39.11px;top:0px;width:1.24px;height:41.67px;background:#474747;"></div>
<svg style="left:10.78px;top:14.13px;" width="18.89" height="13.92" viewBox="0 0 7.6 5.6"><path d="M0.1 2.8Q3.8 -2 7.5 2.8Q3.8 7.6 0.1 2.8Z" fill="#e4e4e4"/><circle cx="3.8" cy="2.7" r="1.5" fill="#4a4a4a"/><circle cx="4.35" cy="2.2" r="0.42" fill="#d8d8d8"/></svg>
<div class="thumb" style="left:44px;top:5px;width:41.33px;height:32.4px;background-color:#fff;background-image:linear-gradient(45deg,#c9c9c9 25%,transparent 25%,transparent 75%,#c9c9c9 75%),linear-gradient(45deg,#c9c9c9 25%,transparent 25%,transparent 75%,#c9c9c9 75%);background-size:10.19px 10.19px;background-position:0 0,5.09px 5.09px;border:1.24px solid #262626;box-sizing:border-box;border-radius:1.99px;overflow:hidden;">
</div>
<span class="t" style="left:97px;top:14px;font-size:13.92px;line-height:16px;color:#e8e8e8;transform:translate(0.71px,0.75px) scaleX(0.94);-webkit-text-stroke:0.25px #e8e8e8;">Die Cut</span>
<svg style="left:327.12px;top:12.39px;" width="12.92" height="16.9" viewBox="0 0 5.2 6.8"><path d="M1.3 3V2a1.3 1.3 0 0 1 2.6 0V3" fill="none" stroke="#cfcfcf" stroke-width="0.7"/><rect x="0.5" y="3" width="4.2" height="3.4" rx="0.5" fill="none" stroke="#cfcfcf" stroke-width="0.7"/><rect x="2.2" y="4.1" width="0.8" height="1.2" fill="#cfcfcf"/></svg>
</div>
<div class="layer" style="left:0px;top:42px;width:361.91px;height:41.35px;background:#535353;">
<div style="left:-0.4px;top:-0.32px;width:362.31px;height:1.24px;background:#464646;"></div>
<div style="left:-0.4px;top:0.92px;width:39.51px;height:40.43px;background:#535353;"></div>
<div style="left:39.11px;top:-0.32px;width:1.24px;height:41.67px;background:#474747;"></div>
<svg style="left:10.78px;top:13.8px;" width="18.89" height="13.92" viewBox="0 0 7.6 5.6"><path d="M0.1 2.8Q3.8 -2 7.5 2.8Q3.8 7.6 0.1 2.8Z" fill="#e4e4e4"/><circle cx="3.8" cy="2.7" r="1.5" fill="#4a4a4a"/><circle cx="4.35" cy="2.2" r="0.42" fill="#d8d8d8"/></svg>
<div class="thumb" style="left:44px;top:5px;width:41.33px;height:32.08px;background-color:#fff;background-image:linear-gradient(45deg,#c9c9c9 25%,transparent 25%,transparent 75%,#c9c9c9 75%),linear-gradient(45deg,#c9c9c9 25%,transparent 25%,transparent 75%,#c9c9c9 75%);background-size:10.19px 10.19px;background-position:0 0,5.09px 5.09px;border:1.24px solid #262626;box-sizing:border-box;border-radius:1.99px;overflow:hidden;">
<div style="left:19.46px;top:-0.23px;width:2.48px;height:32.3px;background:#707070;"></div>
</div>
<span class="t" style="left:98px;top:14px;font-size:13.92px;line-height:16px;color:#e8e8e8;transform:translate(0.19px,0.43px) scaleX(0.9);-webkit-text-stroke:0.25px #e8e8e8;">Safe Area</span>
<svg style="left:327.12px;top:12.07px;" width="12.92" height="16.9" viewBox="0 0 5.2 6.8"><path d="M1.3 3V2a1.3 1.3 0 0 1 2.6 0V3" fill="none" stroke="#cfcfcf" stroke-width="0.7"/><rect x="0.5" y="3" width="4.2" height="3.4" rx="0.5" fill="none" stroke="#cfcfcf" stroke-width="0.7"/><rect x="2.2" y="4.1" width="0.8" height="1.2" fill="#cfcfcf"/></svg>
</div>
<div class="layer" style="left:0px;top:83px;width:361.91px;height:42.02px;background:#535353;">
<div style="left:-0.4px;top:0.35px;width:362.31px;height:1.24px;background:#464646;"></div>
<div style="left:-0.4px;top:1.59px;width:39.51px;height:40.43px;background:#a98b0c;"></div>
<div style="left:39.11px;top:0.35px;width:1.24px;height:41.67px;background:#474747;"></div>
<svg style="left:10.78px;top:14.48px;" width="18.89" height="13.92" viewBox="0 0 7.6 5.6"><path d="M0.1 2.8Q3.8 -2 7.5 2.8Q3.8 7.6 0.1 2.8Z" fill="#e4e4e4"/><circle cx="3.8" cy="2.7" r="1.5" fill="#4a4a4a"/><circle cx="4.35" cy="2.2" r="0.42" fill="#d8d8d8"/></svg>
<div class="thumb" style="left:44px;top:5px;width:41.33px;height:32.75px;background-color:#fff;background-image:linear-gradient(45deg,#c9c9c9 25%,transparent 25%,transparent 75%,#c9c9c9 75%),linear-gradient(45deg,#c9c9c9 25%,transparent 25%,transparent 75%,#c9c9c9 75%);background-size:10.19px 10.19px;background-position:0 0,5.09px 5.09px;border:1.24px solid #262626;box-sizing:border-box;border-radius:1.99px;overflow:hidden;">
<div style="left:13px;top:24.3px;width:5.96px;height:3.98px;background:#f2e21c;"></div>
</div>
<span class="t" style="left:97px;top:15px;font-size:13.92px;line-height:16px;color:#e8e8e8;transform:translate(0.74px,0.1px) scaleX(0.91);-webkit-text-stroke:0.25px #e8e8e8;">Barcode Location</span>
<svg style="left:327.12px;top:12.74px;" width="12.92" height="16.9" viewBox="0 0 5.2 6.8"><path d="M1.3 3V2a1.3 1.3 0 0 1 2.6 0V3" fill="none" stroke="#cfcfcf" stroke-width="0.7"/><rect x="0.5" y="3" width="4.2" height="3.4" rx="0.5" fill="none" stroke="#cfcfcf" stroke-width="0.7"/><rect x="2.2" y="4.1" width="0.8" height="1.2" fill="#cfcfcf"/></svg>
</div>
<div class="layer" style="left:0px;top:125px;width:361.91px;height:41.7px;background:#535353;">
<div style="left:-0.4px;top:0.02px;width:362.31px;height:1.24px;background:#464646;"></div>
<div style="left:-0.4px;top:1.27px;width:39.51px;height:40.43px;background:#535353;"></div>
<div style="left:39.11px;top:0.02px;width:1.24px;height:41.67px;background:#474747;"></div>
<svg style="left:10.78px;top:14.15px;" width="18.89" height="13.92" viewBox="0 0 7.6 5.6"><path d="M0.1 2.8Q3.8 -2 7.5 2.8Q3.8 7.6 0.1 2.8Z" fill="#e4e4e4"/><circle cx="3.8" cy="2.7" r="1.5" fill="#4a4a4a"/><circle cx="4.35" cy="2.2" r="0.42" fill="#d8d8d8"/></svg>
<div class="thumb" style="left:44px;top:5px;width:41.33px;height:32.42px;background-color:#fff;background-image:linear-gradient(45deg,#c9c9c9 25%,transparent 25%,transparent 75%,#c9c9c9 75%),linear-gradient(45deg,#c9c9c9 25%,transparent 25%,transparent 75%,#c9c9c9 75%);background-size:10.19px 10.19px;background-position:0 0,5.09px 5.09px;border:1.24px solid #262626;box-sizing:border-box;border-radius:1.99px;overflow:hidden;">
<div style="left:20.46px;top:0.12px;width:21.37px;height:32.3px;background:#fd8c0f;"></div>
</div>
<div style="left:67.94px;top:20.03px;width:17.89px;height:17.89px;background:#535353;border-left:1.24px solid #20242c;border-top:1.24px solid #20242c;box-sizing:border-box;"></div>
<svg style="left:69.68px;top:22.27px;" width="13.67" height="15.66" viewBox="0 0 5.5 6.3"><path d="M1.15 0H3.75L5.5 1.6V5.4H1.15Z" fill="#e6e6e6"/><path d="M3.75 0L5.5 1.6H3.75Z" fill="#b4b4b4"/><rect x="2.4" y="1.2" width="2" height="3.1" fill="#4c4c4c"/><rect x="0.15" y="3.45" width="2.65" height="2.7" fill="#e8e8e8" stroke="#505050" stroke-width="0.3"/></svg>
<span class="t" style="left:97px;top:14px;font-size:13.92px;line-height:16px;color:#e8e8e8;transform:translate(0.72px,0.77px) scaleX(0.93);-webkit-text-stroke:0.25px #e8e8e8;">Front Cover (Put Your Design Here)</span>
</div>
<div class="layer" style="left:0px;top:167px;width:361.91px;height:41.37px;background:#535353;">
<div style="left:-0.4px;top:-0.3px;width:362.31px;height:1.24px;background:#464646;"></div>
<div style="left:-0.4px;top:0.94px;width:39.51px;height:40.43px;background:#535353;"></div>
<div style="left:39.11px;top:-0.3px;width:1.24px;height:41.67px;background:#474747;"></div>
<svg style="left:10.78px;top:13.83px;" width="18.89" height="13.92" viewBox="0 0 7.6 5.6"><path d="M0.1 2.8Q3.8 -2 7.5 2.8Q3.8 7.6 0.1 2.8Z" fill="#e4e4e4"/><circle cx="3.8" cy="2.7" r="1.5" fill="#4a4a4a"/><circle cx="4.35" cy="2.2" r="0.42" fill="#d8d8d8"/></svg>
<div class="thumb" style="left:44px;top:5px;width:41.33px;height:32.1px;background-color:#fff;background-image:linear-gradient(45deg,#c9c9c9 25%,transparent 25%,transparent 75%,#c9c9c9 75%),linear-gradient(45deg,#c9c9c9 25%,transparent 25%,transparent 75%,#c9c9c9 75%);background-size:10.19px 10.19px;background-position:0 0,5.09px 5.09px;border:1.24px solid #262626;box-sizing:border-box;border-radius:1.99px;overflow:hidden;">
<div style="left:0.08px;top:-0.21px;width:20.38px;height:32.3px;background:#fca52b;"></div>
<div style="left:20.46px;top:-0.21px;width:1.99px;height:32.3px;background:#f4f4f4;"></div>
</div>
<div style="left:67.94px;top:19.7px;width:17.89px;height:17.89px;background:#535353;border-left:1.24px solid #20242c;border-top:1.24px solid #20242c;box-sizing:border-box;"></div>
<svg style="left:69.68px;top:21.94px;" width="13.67" height="15.66" viewBox="0 0 5.5 6.3"><path d="M1.15 0H3.75L5.5 1.6V5.4H1.15Z" fill="#e6e6e6"/><path d="M3.75 0L5.5 1.6H3.75Z" fill="#b4b4b4"/><rect x="2.4" y="1.2" width="2" height="3.1" fill="#4c4c4c"/><rect x="0.15" y="3.45" width="2.65" height="2.7" fill="#e8e8e8" stroke="#505050" stroke-width="0.3"/></svg>
<span class="t" style="left:97px;top:14px;font-size:13.92px;line-height:16px;color:#e8e8e8;transform:translate(0.71px,0.45px) scaleX(0.94);-webkit-text-stroke:0.25px #e8e8e8;">Back Cover  (Put Your Design Here)</span>
</div>
<div class="layer" style="left:0px;top:208px;width:361.91px;height:42.04px;background:#6b6b6b;">
<div style="left:-0.4px;top:0.37px;width:362.31px;height:1.24px;background:#464646;"></div>
<div style="left:-0.4px;top:1.61px;width:39.51px;height:40.43px;background:#535353;"></div>
<div style="left:39.11px;top:0.37px;width:1.24px;height:41.67px;background:#474747;"></div>
<svg style="left:10.78px;top:14.5px;" width="18.89" height="13.92" viewBox="0 0 7.6 5.6"><path d="M0.1 2.8Q3.8 -2 7.5 2.8Q3.8 7.6 0.1 2.8Z" fill="#e4e4e4"/><circle cx="3.8" cy="2.7" r="1.5" fill="#4a4a4a"/><circle cx="4.35" cy="2.2" r="0.42" fill="#d8d8d8"/></svg>
<div style="left:40.85px;top:2.24px;width:47.71px;height:38.77px;background:transparent;border:2.11px solid #f4f4f4;box-sizing:border-box;"></div>
<div style="left:56.51px;top:1.74px;width:16.4px;height:39.76px;background:#6b6b6b;"></div>
<div style="left:40.35px;top:13.42px;width:48.71px;height:16.4px;background:#6b6b6b;"></div>
<div style="left:44.08px;top:5.47px;width:41.25px;height:32.3px;background:#fff;border:1.99px solid #1e1e1e;box-sizing:border-box;"></div>
<span class="t" style="left:97px;top:15px;font-size:13.92px;line-height:16px;color:#e8e8e8;transform:translate(0.73px,0.12px) scaleX(0.92);-webkit-text-stroke:0.25px #e8e8e8;">Layer</span>
<svg style="left:327.12px;top:12.76px;" width="12.92" height="16.9" viewBox="0 0 5.2 6.8"><path d="M1.3 3V2a1.3 1.3 0 0 1 2.6 0V3" fill="none" stroke="#f4f4f4" stroke-width="0.8"/><rect x="0.3" y="2.9" width="4.6" height="3.6" rx="0.5" fill="#f4f4f4"/><rect x="2.2" y="4.1" width="0.8" height="1.2" fill="#555"/></svg>
</div>
<div style="left:-0.4px;top:250.04px;width:362.31px;height:1.24px;background:#464646;"></div>
</div>
<div class="panel-footer" style="left:0px;top:1240px;width:378.31px;height:30.28px;background:#535353;">
<div style="left:-0.4px;top:-0.28px;width:378.71px;height:1.24px;background:#454545;"></div>
<svg style="left:118.88px;top:11.4px;" width="17.39" height="8.95" viewBox="0 0 7 3.6"><rect x="0.4" y="0.5" width="3" height="2.6" rx="1.2" fill="none" stroke="#8e8e8e" stroke-width="0.7"/><rect x="3.6" y="0.5" width="3" height="2.6" rx="1.2" fill="none" stroke="#8e8e8e" stroke-width="0.7"/></svg>
<span class="t" style="left:154px;top:5px;font-size:16.4px;line-height:19px;color:#9a9a9a;font-style:italic;font-family:'Liberation Serif',serif;transform:translate(0.45px,0.74px) scaleX(1.29);">fx</span>
<svg style="left:186.47px;top:8.91px;" width="18.39" height="13.92" viewBox="0 0 7.4 5.6"><rect x="0" y="0" width="7.4" height="5.6" fill="#b8b8b8"/><circle cx="3.7" cy="2.8" r="1.7" fill="#535353"/></svg>
<svg style="left:223.75px;top:8.41px;" width="15.9" height="15.9" viewBox="0 0 6.4 6.4"><circle cx="3.2" cy="3.2" r="2.7" fill="none" stroke="#b8b8b8" stroke-width="0.8"/><path d="M1.3 5.1A2.7 2.7 0 0 1 5.1 1.3Z" fill="#b8b8b8"/></svg>
<svg style="left:257.54px;top:8.91px;" width="18.39" height="13.92" viewBox="0 0 7.4 5.6"><path d="M0 0H2.8L3.6 0.9H7.4V5.6H0Z" fill="#b8b8b8"/></svg>
<svg style="left:293.33px;top:8.41px;" width="15.9" height="15.9" viewBox="0 0 6.4 6.4"><path d="M0.5 0.5H5.9V5.9H2.4L0.5 4Z" fill="none" stroke="#b8b8b8" stroke-width="0.8"/><path d="M0.5 4H2.4V5.9" fill="#b8b8b8"/></svg>
<svg style="left:329.11px;top:7.92px;" width="13.92" height="16.4" viewBox="0 0 5.6 6.6"><path d="M0.2 1.3H5.4M2 1.3V0.4H3.6V1.3" fill="none" stroke="#8a8a8a" stroke-width="0.7"/><path d="M0.8 2H4.8L4.4 6.4H1.2Z" fill="#8a8a8a"/></svg>
</div>
</div>
</div>
</div>
<div class="ring" style="left:652px;top:131px;width:396px;height:396px;box-sizing:border-box;border:8px solid rgba(255,255,255,.52);border-radius:50%"></div>
<div class="caption" style="left:0px;top:580px;width:1005px;height:60px;">
<span class="t" style="left:165px;top:11px;font-size:26.2px;line-height:30px;color:#f8a51f;font-weight:bold;transform:translate(0.22px,0.54px) scaleX(1.06);-webkit-text-stroke:0.55px #292929;">THE</span>
 
<span class="t" style="left:227px;top:11px;font-size:26.2px;line-height:30px;color:#f8a51f;font-weight:bold;transform:translate(0.74px,0.54px) scaleX(0.98);-webkit-text-stroke:0.55px #292929;">TEMPLATE</span>
 
<span class="t" style="left:372px;top:11px;font-size:26.2px;line-height:30px;color:#f8a51f;font-weight:bold;transform:translate(0.69px,0.54px) scaleX(0.94);-webkit-text-stroke:0.55px #292929;">IS</span>
 
<span class="t" style="left:402px;top:11px;font-size:26.2px;line-height:30px;color:#f8a51f;font-weight:bold;transform:translate(0.52px,0.54px) scaleX(0.99);-webkit-text-stroke:0.55px #292929;">LAYERED</span>
 
<span class="t" style="left:531px;top:11px;font-size:26.2px;line-height:30px;color:#f8a51f;font-weight:bold;transform:translate(0px,0.54px) scaleX(1.06);-webkit-text-stroke:0.55px #292929;">AND</span>
 
<span class="t" style="left:599px;top:11px;font-size:26.2px;line-height:30px;color:#f8a51f;font-weight:bold;transform:translate(0.3px,0.54px) scaleX(1.02);-webkit-text-stroke:0.55px #292929;">WELL</span>
 
<span class="t" style="left:681px;top:11px;font-size:26.2px;line-height:30px;color:#f8a51f;font-weight:bold;transform:translate(0.74px,0.54px) scaleX(1.01);-webkit-text-stroke:0.55px #292929;">ORGANIZED</span>
</div>
</div>
</body></html>
